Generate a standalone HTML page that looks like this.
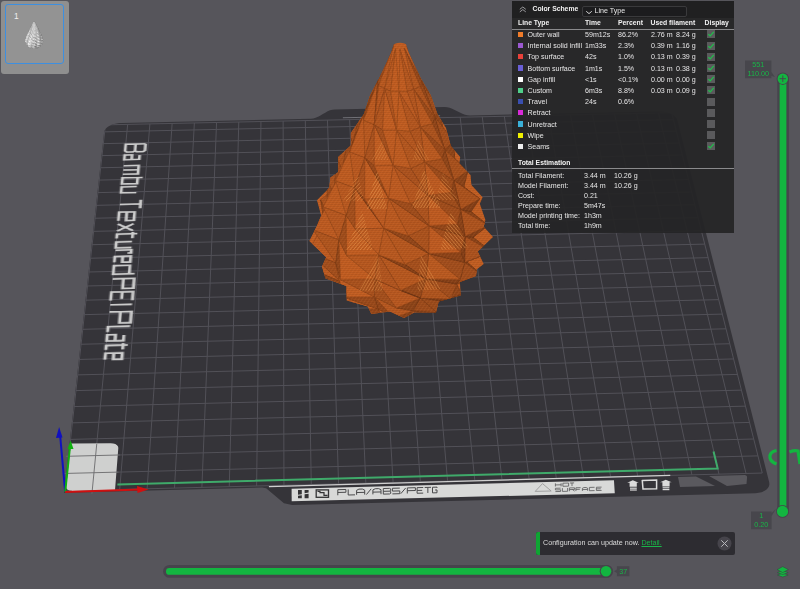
<!DOCTYPE html>
<html><head><meta charset="utf-8">
<style>
*{margin:0;padding:0;box-sizing:border-box}
html,body{width:800px;height:589px;overflow:hidden;background:#56555b;font-family:"Liberation Sans",sans-serif}
#scene{position:absolute;left:0;top:0}
.abs{position:absolute}
#thumb{left:1px;top:1px;width:68px;height:73px;background:#8f8f8f;border-radius:3px}
#thumbin{left:5px;top:4px;width:59px;height:60px;border:1.4px solid #3d8fe0;border-radius:3px;background:#939393}
#thumbin span{position:absolute;left:8px;top:6.5px;color:#f0f0f0;font-size:8.4px;line-height:9px}
#ptext{left:0;top:0;width:256px;height:256px;transform-origin:0 0;transform:matrix3d(2.228789565174428,-0.04478521966795166,0,2.4782137766714392e-05,-0.20630338006798807,1.0676674045005554,0,-0.0007375917103212529,0,0,1,0,105.40088093560712,124.86503627807188,0,1.0)}
#ptext div{position:absolute;left:0;top:0;transform-origin:0 0;white-space:nowrap;color:#c8c8c8;font-size:13.6px;line-height:16px;font-weight:bold;letter-spacing:0px}
#legend{left:512px;top:1px;width:222px;height:232px;background:rgba(37,37,38,0.93);color:#e6e6e6;font-size:7.4px}
#legend .t{position:absolute;height:13px;line-height:13px;white-space:nowrap;font-size:7.1px}
#legend .t.b{font-size:6.8px;font-weight:bold;color:#f2f2f2}
#legend .sw{position:absolute;width:5.2px;height:5.2px}
#legend .cb{position:absolute;width:8px;height:8px;background:#5a5a5c}
#legend .cb svg{display:block}
#legend .sep{position:absolute;left:0;width:222px;height:1.2px;background:#8a8a8c}
#legend .chev{position:absolute;left:6.5px;top:5px}
#legend .combo{position:absolute;left:69.6px;top:4.6px;width:105px;height:11px;background:#1c1c1e;border:1px solid #3a3a3c;border-radius:2px}
#legend .combo span{position:absolute;left:12px;top:-1.5px;line-height:13px;font-size:7.1px;color:#e6e6e6}
.b{font-weight:bold}
.glab{color:#19b548;font-size:7.2px;line-height:8.6px;text-align:center}
#notif{left:535.5px;top:531.8px;width:199.3px;height:23px;background:#2d2c31;border-radius:2px}
#nbar{position:absolute;left:0;top:0;width:4.5px;height:23px;background:#0fa533;border-radius:2px 0 0 2px}
#notif span{position:absolute;left:7.5px;top:5px;line-height:13px;font-size:7.15px;color:#dcdcdc;white-space:nowrap}
#notif u{color:#19b548}
</style></head><body>
<svg id="scene" width="800" height="589" viewBox="0 0 800 589">
  <path d="M64.08,492.66 L262.06,487.59 L266.16,488.36 L283.98,503.14 L292.27,505.08 L755.48,493.13 L758.63,492.84 L761.55,492.16 L764.14,491.11 L766.29,489.73 L767.92,488.07 L768.97,486.21 L769.39,484.21 L769.19,482.15 L677.37,120.19 L676.79,118.75 L675.78,117.36 L674.39,116.05 L672.63,114.85 L670.57,113.79 L668.23,112.91 L665.69,112.21 L663.01,111.71 L660.25,111.44 L657.47,111.38 L469.92,115.41 L467.47,115.25 L464.97,114.66 L462.43,113.73 L459.86,112.54 L457.28,111.21 L454.71,109.89 L452.15,108.71 L449.63,107.78 L447.15,107.2 L444.71,107.03 L334.85,109.38 L332.43,109.65 L330.03,110.34 L327.64,111.37 L325.26,112.66 L322.87,114.09 L320.48,115.53 L318.08,116.83 L315.67,117.87 L313.25,118.56 L310.82,118.83 L121.81,122.89 L119.19,123.06 L116.62,123.43 L114.14,124.0 L111.83,124.76 L109.75,125.69 L107.93,126.77 L106.43,127.97 L105.29,129.26 L104.52,130.6 L104.17,131.98 Z" fill="#353439"/>
  <clipPath id="pc"><path d="M64.08,492.66 L262.06,487.59 L266.16,488.36 L283.98,503.14 L292.27,505.08 L755.48,493.13 L758.63,492.84 L761.55,492.16 L764.14,491.11 L766.29,489.73 L767.92,488.07 L768.97,486.21 L769.39,484.21 L769.19,482.15 L677.37,120.19 L676.79,118.75 L675.78,117.36 L674.39,116.05 L672.63,114.85 L670.57,113.79 L668.23,112.91 L665.69,112.21 L663.01,111.71 L660.25,111.44 L657.47,111.38 L469.92,115.41 L467.47,115.25 L464.97,114.66 L462.43,113.73 L459.86,112.54 L457.28,111.21 L454.71,109.89 L452.15,108.71 L449.63,107.78 L447.15,107.2 L444.71,107.03 L334.85,109.38 L332.43,109.65 L330.03,110.34 L327.64,111.37 L325.26,112.66 L322.87,114.09 L320.48,115.53 L318.08,116.83 L315.67,117.87 L313.25,118.56 L310.82,118.83 L121.81,122.89 L119.19,123.06 L116.62,123.43 L114.14,124.0 L111.83,124.76 L109.75,125.69 L107.93,126.77 L106.43,127.97 L105.29,129.26 L104.52,130.6 L104.17,131.98 Z"/></clipPath>
  <path d="M64.83,490.88 L105.4,124.87 M92.28,490.18 L127.66,124.39 M119.71,489.47 L149.9,123.91 M147.12,488.77 L172.14,123.43 M174.52,488.07 L194.36,122.95 M201.9,487.37 L216.57,122.47 M229.26,486.67 L238.77,122.0 M256.61,485.97 L260.96,121.52 M283.94,485.27 L283.14,121.04 M311.26,484.58 L305.31,120.57 M338.55,483.88 L327.47,120.09 M365.84,483.18 L349.61,119.61 M393.1,482.48 L371.75,119.14 M420.35,481.79 L393.87,118.66 M447.58,481.09 L415.99,118.19 M474.79,480.39 L438.09,117.71 M501.99,479.7 L460.18,117.23 M529.17,479.0 L482.26,116.76 M556.34,478.31 L504.33,116.28 M583.49,477.61 L526.39,115.81 M610.62,476.92 L548.44,115.34 M637.73,476.23 L570.48,114.86 M664.83,475.53 L592.5,114.39 M691.91,474.84 L614.52,113.92 M718.98,474.15 L636.52,113.44 M746.03,473.46 L658.52,112.97 M762.25,473.04 L671.71,112.69 M64.83,490.88 L762.25,473.04 M66.76,473.41 L757.94,455.87 M68.67,456.26 L753.7,439.0 M70.53,439.4 L749.54,422.43 M72.37,422.85 L745.44,406.15 M74.17,406.58 L741.42,390.14 M75.94,390.6 L737.47,374.42 M77.69,374.88 L733.59,358.95 M79.4,359.43 L729.77,343.75 M81.08,344.25 L726.01,328.81 M82.74,329.31 L722.32,314.11 M84.37,314.63 L718.69,299.65 M85.97,300.18 L715.11,285.42 M87.54,285.97 L711.6,271.43 M89.09,271.99 L708.14,257.66 M90.62,258.23 L704.73,244.11 M92.12,244.69 L701.38,230.77 M93.6,231.36 L698.08,217.64 M95.05,218.24 L694.83,204.72 M96.48,205.33 L691.64,191.99 M97.89,192.61 L688.49,179.46 M99.28,180.09 L685.39,167.12 M100.65,167.76 L682.33,154.97 M101.99,155.61 L679.33,142.99 M103.32,143.64 L676.36,131.2 M104.63,131.85 L673.44,119.58 M105.4,124.87 L671.71,112.69" stroke="#525158" stroke-width="1" fill="none" clip-path="url(#pc)"/>
  <path d="M268.91,486.54 L670.25,475.4" stroke="#cfcfcf" stroke-width="1.2" fill="none"/>
  <path d="M342.89,117.8 L440.1,115.71" stroke="#707076" stroke-width="1.1" fill="none"/>
  <path d="M291.61,488.77 L613.93,480.34 L614.79,493.2 L291.69,501.34 Z" fill="#d8d9d8"/>
  <path d="M678,477 L696,476.6 L715,486 L680,487 Z" fill="#5a595e"/>
  <path d="M709,476 L745,475 Q747.5,475.5 747,478 L746.5,484 L727,486 Z" fill="#5a595e"/>
  <g fill="#dcdcdc">
   <path d="M632.8,480.2 L638.8,482.8 L636.8,482.8 L636.8,486.8 L629.6,486.8 L629.6,482.8 L627.2,482.8 Z"/>
   <rect x="630" y="487.6" width="6.8" height="1.2"/><rect x="630" y="489.4" width="6.8" height="1.2"/>
   <path d="M665.8,479.7 L671.6,482.3 L669.6,482.3 L669.6,486.4 L662.4,486.4 L662.4,482.3 L660.1,482.3 Z"/>
   <rect x="662.6" y="487.2" width="6.8" height="1.2"/><rect x="662.6" y="489" width="6.8" height="1.2"/>
  </g>
  <path d="M642.3,480.6 L656.6,480 L656.6,488.8 L643,489.1 Z" fill="none" stroke="#dcdcdc" stroke-width="1.5"/>
  <g fill="#333335">
   <path d="M298,490 H301.8 V494.3 L298,494.8 Z"/><path d="M298,495.8 L301.8,495.3 V498.3 H298 Z"/>
   <path d="M304.6,490 H308.6 V492.6 L304.6,493.2 Z"/><path d="M304.6,494.2 L308.6,493.7 V498.2 H304.6 Z"/>
  </g>
  <rect x="316.2" y="489.9" width="12.3" height="7.4" fill="none" stroke="#333335" stroke-width="1.3"/>
  <path d="M317.5,491.4 H320 V492.6 H324 V495.3 H327.6" fill="none" stroke="#333335" stroke-width="1.2"/>
  <path d="M542.5,483.6 L551.2,491 L535.2,491.4 Z" fill="none" stroke="#8a8a8a" stroke-width="0.7"/>
  <path d="M337.80,495.28 L337.80,489.68 L345.90,489.47 L345.90,492.27 L337.80,492.48 M348.20,489.41 L348.20,495.01 L355.00,494.84 M356.60,494.80 L356.60,490.32 L358.91,489.14 L362.39,489.05 L364.70,490.11 L364.70,494.59 M356.60,492.56 L364.70,492.35 M366.40,494.55 L371.20,488.83 M372.90,494.38 L372.90,489.90 L375.21,488.73 L378.69,488.64 L381.00,489.70 L381.00,494.18 M372.90,492.14 L381.00,491.94 M383.30,488.52 L389.64,488.36 L390.70,488.89 L390.70,490.57 L389.64,491.16 L390.70,491.69 L390.70,493.37 L389.64,493.96 L383.30,494.12 L383.30,488.52 M383.30,491.32 L389.64,491.16 M399.80,488.10 L392.40,488.29 L392.40,491.09 L399.80,490.90 L399.80,493.70 L392.40,493.89 M400.80,493.67 L405.70,487.95 M407.30,493.51 L407.30,487.91 L415.40,487.70 L415.40,490.50 L407.30,490.71 M423.20,487.50 L417.10,487.66 L417.10,493.26 L423.20,493.10 M417.10,490.46 L422.18,490.33 M424.70,487.46 L431.00,487.30 M427.85,487.38 L427.85,492.98 M437.00,487.99 L437.00,487.15 L432.50,487.26 L432.50,492.86 L437.00,492.75 L437.00,489.95 L435.07,490.00" fill="none" stroke="#4a4a4c" stroke-width="1.0"/>
  <path d="M555.40,483.39 L555.40,486.49 M561.10,483.24 L561.10,486.34 M555.40,484.94 L561.10,484.79 M562.90,483.20 L568.60,483.05 L568.60,486.15 L562.90,486.30 L562.90,483.20 M569.90,483.02 L574.10,482.91 M572.00,482.97 L572.00,486.07 M560.60,488.16 L555.40,488.29 L555.40,489.94 L560.60,489.81 L560.60,491.46 L555.40,491.59 M562.40,488.11 L562.40,491.41 L567.60,491.28 L567.60,487.98 M569.40,491.23 L569.40,487.93 L574.60,487.80 L574.60,489.45 L569.40,489.58 M572.37,489.51 L574.60,491.10 M580.60,487.65 L575.90,487.77 L575.90,491.07 M575.90,489.42 L579.82,489.32 M582.40,490.90 L582.40,488.26 L583.89,487.56 L586.11,487.51 L587.60,488.13 L587.60,490.77 M582.40,489.58 L587.60,489.45 M594.60,487.29 L589.40,487.42 L589.40,490.72 L594.60,490.59 M601.60,487.11 L596.40,487.24 L596.40,490.54 L601.60,490.41 M596.40,488.89 L600.73,488.78" fill="none" stroke="#5e5e60" stroke-width="0.85"/>
  <path d="M117.39,484.45 L717.68,468.44 L713.54,451.53" stroke="#3faa6a" stroke-width="2" fill="none"/>
  <clipPath id="cc"><path d="M394,44.3 L406,44.3 L408.5,52 L414,64 L421,78.8 L430.7,95 L437.4,114 L446,128 L450.8,145.9 L460.2,157.1 L459.3,163.6 L470.5,174.9 L471.4,185.1 L482.6,197.3 L479.8,203.8 L485.4,220 L483.7,226.8 L493,237 L477.7,251.4 L483.7,264.1 L476.9,269.2 L476,276 L459.9,282 L460.7,295.6 L438.7,301.5 L436,312.5 L414.3,312.5 L404,318.1 L390,311.5 L371.3,314 L367.9,306.4 L346.7,300.5 L346.7,286 L325.5,278.4 L322,266.5 L326.3,257.2 L309.3,240.9 L317,225.7 L321.2,215.5 L317,200.2 L327.2,190 L329.3,187.6 L330.5,177.4 L338.2,172.3 L338.2,157.1 L350.9,145.6 L350.9,132.9 L364,114 L370.2,95 L379,78.8 L386,64 L391.5,52 Z"/></clipPath>
  <path d="M394,44.3 L406,44.3 L408.5,52 L414,64 L421,78.8 L430.7,95 L437.4,114 L446,128 L450.8,145.9 L460.2,157.1 L459.3,163.6 L470.5,174.9 L471.4,185.1 L482.6,197.3 L479.8,203.8 L485.4,220 L483.7,226.8 L493,237 L477.7,251.4 L483.7,264.1 L476.9,269.2 L476,276 L459.9,282 L460.7,295.6 L438.7,301.5 L436,312.5 L414.3,312.5 L404,318.1 L390,311.5 L371.3,314 L367.9,306.4 L346.7,300.5 L346.7,286 L325.5,278.4 L322,266.5 L326.3,257.2 L309.3,240.9 L317,225.7 L321.2,215.5 L317,200.2 L327.2,190 L329.3,187.6 L330.5,177.4 L338.2,172.3 L338.2,157.1 L350.9,145.6 L350.9,132.9 L364,114 L370.2,95 L379,78.8 L386,64 L391.5,52 Z" fill="#c25e22"/>
  <ellipse cx="400" cy="45" rx="6.2" ry="2.2" fill="#c25e22"/>
  <g clip-path="url(#cc)"><defs><pattern id="ll" width="4" height="2" patternUnits="userSpaceOnUse"><rect width="4" height="1" fill="#5a2508" opacity="0.12"/></pattern><pattern id="dg" width="3" height="3" patternUnits="userSpaceOnUse" patternTransform="rotate(35)"><rect width="1" height="3" fill="#e89050" opacity="0.12"/></pattern></defs>
<path d="M399.6,206.8 L374.7,225.9 L359.1,239.3Z" fill="rgb(143, 69, 25)" stroke="rgb(114, 55, 20)" stroke-width="0.7"/>
<path d="M396.0,183.6 L367.7,200.4 L351.9,215.6Z" fill="rgb(148, 71, 26)" stroke="rgb(118, 56, 20)" stroke-width="0.7"/>
<path d="M359.1,239.3 L347.8,267.5 L350.6,279.2Z" fill="rgb(161, 78, 28)" stroke="rgb(128, 62, 22)" stroke-width="0.7"/>
<path d="M351.9,215.6 L329.1,243.4 L334.4,258.7Z" fill="rgb(168, 81, 29)" stroke="rgb(134, 64, 23)" stroke-width="0.7"/>
<path d="M393.1,163.0 L365.0,179.1 L350.1,193.4Z" fill="rgb(148, 72, 26)" stroke="rgb(118, 57, 20)" stroke-width="0.7"/>
<path d="M466.6,261.6 L451.0,283.9 L458.1,272.6Z" fill="rgb(131, 63, 23)" stroke="rgb(104, 50, 18)" stroke-width="0.7"/>
<path d="M350.1,193.4 L319.2,221.0 L326.7,237.7Z" fill="rgb(171, 83, 30)" stroke="rgb(136, 66, 24)" stroke-width="0.7"/>
<path d="M473.2,237.3 L466.6,261.6 L474.5,246.6Z" fill="rgb(131, 63, 23)" stroke="rgb(104, 50, 18)" stroke-width="0.7"/>
<path d="M319.2,221.0 L334.4,258.7 L326.7,237.7Z" fill="rgb(136, 66, 23)" stroke="rgb(108, 52, 18)" stroke-width="0.7"/>
<path d="M391.2,141.4 L365.0,160.0 L352.3,172.9Z" fill="rgb(146, 71, 25)" stroke="rgb(116, 56, 20)" stroke-width="0.7"/>
<path d="M471.1,211.7 L473.2,237.3 L480.3,220.5Z" fill="rgb(139, 67, 24)" stroke="rgb(111, 53, 19)" stroke-width="0.7"/>
<path d="M334.4,258.7 L336.2,288.6 L353.5,296.7Z" fill="rgb(186, 90, 32)" stroke="rgb(148, 72, 25)" stroke-width="0.7"/>
<path d="M336.2,288.6 L368.3,310.4 L353.5,296.7Z" fill="rgb(140, 68, 24)" stroke="rgb(112, 54, 19)" stroke-width="0.7"/>
<path d="M441.8,300.8 L434.2,303.4 L461.7,294.4Z" fill="rgb(131, 63, 23)" stroke="rgb(104, 50, 18)" stroke-width="0.7"/>
<path d="M352.3,172.9 L320.6,199.9 L327.5,215.6Z" fill="rgb(171, 83, 30)" stroke="rgb(136, 66, 24)" stroke-width="0.7"/>
<path d="M320.6,199.9 L326.7,237.7 L327.5,215.6Z" fill="rgb(148, 72, 26)" stroke="rgb(118, 57, 20)" stroke-width="0.7"/>
<path d="M463.8,186.9 L471.1,211.7 L474.5,195.7Z" fill="rgb(140, 68, 24)" stroke="rgb(112, 54, 19)" stroke-width="0.7"/>
<path d="M456.7,284.0 L451.0,283.9 L482.0,275.1Z" fill="rgb(131, 63, 23)" stroke="rgb(104, 50, 18)" stroke-width="0.7"/>
<path d="M326.7,237.7 L316.7,271.5 L340.4,281.5Z" fill="rgb(189, 91, 33)" stroke="rgb(151, 72, 26)" stroke-width="0.7"/>
<path d="M316.7,271.5 L353.5,296.7 L340.4,281.5Z" fill="rgb(145, 70, 25)" stroke="rgb(116, 56, 20)" stroke-width="0.7"/>
<path d="M456.7,284.0 L441.8,300.8 L461.7,294.4Z" fill="rgb(146, 70, 25)" stroke="rgb(116, 56, 20)" stroke-width="0.7"/>
<path d="M464.6,262.4 L482.0,275.1 L466.6,261.6Z" fill="rgb(135, 65, 23)" stroke="rgb(108, 52, 18)" stroke-width="0.7"/>
<path d="M390.6,119.0 L367.3,140.2 L356.5,150.9Z" fill="rgb(142, 69, 25)" stroke="rgb(113, 55, 20)" stroke-width="0.7"/>
<path d="M354.5,308.5 L383.9,319.1 L378.1,309.1Z" fill="rgb(148, 71, 25)" stroke="rgb(118, 56, 20)" stroke-width="0.7"/>
<path d="M413.0,310.8 L426.9,314.6 L436.4,312.3Z" fill="rgb(131, 63, 23)" stroke="rgb(104, 50, 18)" stroke-width="0.7"/>
<path d="M464.6,262.4 L466.6,261.6 L491.7,251.8Z" fill="rgb(131, 63, 23)" stroke="rgb(104, 50, 18)" stroke-width="0.7"/>
<path d="M454.7,160.7 L463.8,186.9 L464.8,172.5Z" fill="rgb(138, 66, 24)" stroke="rgb(110, 52, 19)" stroke-width="0.7"/>
<path d="M326.9,179.7 L327.5,215.6 L333.8,193.7Z" fill="rgb(156, 75, 27)" stroke="rgb(124, 60, 21)" stroke-width="0.7"/>
<path d="M356.5,150.9 L326.9,179.7 L333.8,193.7Z" fill="rgb(171, 83, 30)" stroke="rgb(136, 66, 24)" stroke-width="0.7"/>
<path d="M394.1,317.9 L407.0,320.7 L413.0,310.8Z" fill="rgb(136, 66, 24)" stroke="rgb(108, 52, 19)" stroke-width="0.7"/>
<path d="M465.1,236.5 L491.7,251.8 L473.2,237.3Z" fill="rgb(138, 67, 24)" stroke="rgb(110, 53, 19)" stroke-width="0.7"/>
<path d="M340.4,281.5 L354.5,308.5 L378.1,309.1Z" fill="rgb(194, 94, 34)" stroke="rgb(155, 75, 27)" stroke-width="0.7"/>
<path d="M327.5,215.6 L308.5,252.3 L335.8,262.8Z" fill="rgb(189, 91, 33)" stroke="rgb(151, 72, 26)" stroke-width="0.7"/>
<path d="M464.6,262.4 L456.7,284.0 L482.0,275.1Z" fill="rgb(161, 77, 28)" stroke="rgb(128, 61, 22)" stroke-width="0.7"/>
<path d="M465.1,236.5 L473.2,237.3 L488.4,225.3Z" fill="rgb(131, 63, 23)" stroke="rgb(104, 50, 18)" stroke-width="0.7"/>
<path d="M308.5,252.3 L340.4,281.5 L335.8,262.8Z" fill="rgb(162, 78, 28)" stroke="rgb(129, 62, 22)" stroke-width="0.7"/>
<path d="M420.2,298.0 L436.4,312.3 L441.8,300.8Z" fill="rgb(155, 75, 27)" stroke="rgb(124, 60, 21)" stroke-width="0.7"/>
<path d="M460.6,209.5 L488.4,225.3 L471.1,211.7Z" fill="rgb(139, 67, 24)" stroke="rgb(111, 53, 19)" stroke-width="0.7"/>
<path d="M443.7,133.4 L454.7,160.7 L453.0,148.7Z" fill="rgb(134, 65, 23)" stroke="rgb(107, 52, 18)" stroke-width="0.7"/>
<path d="M420.2,298.0 L413.0,310.8 L436.4,312.3Z" fill="rgb(156, 75, 27)" stroke="rgb(124, 60, 21)" stroke-width="0.7"/>
<path d="M460.6,209.5 L471.1,211.7 L479.8,198.8Z" fill="rgb(131, 63, 23)" stroke="rgb(104, 50, 18)" stroke-width="0.7"/>
<path d="M336.6,157.7 L333.8,193.7 L342.2,169.4Z" fill="rgb(158, 76, 27)" stroke="rgb(126, 60, 21)" stroke-width="0.7"/>
<path d="M335.8,262.8 L340.4,281.5 L343.3,297.0Z" fill="rgb(134, 65, 23)" stroke="rgb(107, 52, 18)" stroke-width="0.7"/>
<path d="M374.3,297.0 L378.1,309.1 L394.1,317.9Z" fill="rgb(146, 70, 25)" stroke="rgb(116, 56, 20)" stroke-width="0.7"/>
<path d="M465.1,236.5 L464.6,262.4 L491.7,251.8Z" fill="rgb(171, 82, 30)" stroke="rgb(136, 65, 24)" stroke-width="0.7"/>
<path d="M420.2,298.0 L441.8,300.8 L451.1,299.3Z" fill="rgb(131, 63, 23)" stroke="rgb(104, 50, 18)" stroke-width="0.7"/>
<path d="M374.3,297.0 L394.1,317.9 L413.0,310.8Z" fill="rgb(182, 88, 32)" stroke="rgb(145, 70, 25)" stroke-width="0.7"/>
<path d="M363.2,127.4 L336.6,157.7 L342.2,169.4Z" fill="rgb(169, 82, 29)" stroke="rgb(135, 65, 23)" stroke-width="0.7"/>
<path d="M343.3,297.0 L378.1,309.1 L374.3,297.0Z" fill="rgb(152, 73, 26)" stroke="rgb(121, 58, 20)" stroke-width="0.7"/>
<path d="M333.8,193.7 L313.3,230.1 L338.9,239.9Z" fill="rgb(189, 91, 33)" stroke="rgb(151, 72, 26)" stroke-width="0.7"/>
<path d="M453.9,180.5 L479.8,198.8 L463.8,186.9Z" fill="rgb(134, 65, 23)" stroke="rgb(107, 52, 18)" stroke-width="0.7"/>
<path d="M460.2,279.5 L456.7,284.0 L464.6,262.4Z" fill="rgb(131, 63, 23)" stroke="rgb(104, 50, 18)" stroke-width="0.7"/>
<path d="M313.3,230.1 L335.8,262.8 L338.9,239.9Z" fill="rgb(175, 85, 30)" stroke="rgb(140, 68, 24)" stroke-width="0.7"/>
<path d="M335.8,262.8 L343.3,297.0 L374.3,297.0Z" fill="rgb(194, 94, 34)" stroke="rgb(155, 75, 27)" stroke-width="0.7"/>
<path d="M460.6,209.5 L465.1,236.5 L488.4,225.3Z" fill="rgb(172, 83, 30)" stroke="rgb(137, 66, 24)" stroke-width="0.7"/>
<path d="M453.9,180.5 L463.8,186.9 L468.0,170.7Z" fill="rgb(136, 66, 24)" stroke="rgb(108, 52, 19)" stroke-width="0.7"/>
<path d="M396.4,308.0 L413.0,310.8 L420.2,298.0Z" fill="rgb(138, 67, 24)" stroke="rgb(110, 53, 19)" stroke-width="0.7"/>
<path d="M425.8,278.9 L451.1,299.3 L456.7,284.0Z" fill="rgb(160, 77, 28)" stroke="rgb(128, 61, 22)" stroke-width="0.7"/>
<path d="M432.8,104.6 L443.7,133.4 L440.4,124.1Z" fill="rgb(131, 63, 23)" stroke="rgb(104, 50, 18)" stroke-width="0.7"/>
<path d="M425.8,278.9 L456.7,284.0 L460.2,279.5Z" fill="rgb(131, 63, 23)" stroke="rgb(104, 50, 18)" stroke-width="0.7"/>
<path d="M444.6,149.4 L468.0,170.7 L454.7,160.7Z" fill="rgb(131, 63, 23)" stroke="rgb(104, 50, 18)" stroke-width="0.7"/>
<path d="M338.9,239.9 L335.8,262.8 L340.6,279.8Z" fill="rgb(148, 72, 26)" stroke="rgb(118, 57, 20)" stroke-width="0.7"/>
<path d="M460.8,252.5 L464.6,262.4 L465.1,236.5Z" fill="rgb(132, 63, 23)" stroke="rgb(105, 50, 18)" stroke-width="0.7"/>
<path d="M453.9,180.5 L460.6,209.5 L479.8,198.8Z" fill="rgb(170, 82, 29)" stroke="rgb(136, 65, 23)" stroke-width="0.7"/>
<path d="M348.8,133.5 L342.2,169.4 L353.0,142.6Z" fill="rgb(159, 77, 28)" stroke="rgb(127, 61, 22)" stroke-width="0.7"/>
<path d="M425.8,278.9 L420.2,298.0 L451.1,299.3Z" fill="rgb(174, 84, 30)" stroke="rgb(139, 67, 24)" stroke-width="0.7"/>
<path d="M342.2,169.4 L323.1,207.0 L346.2,215.5Z" fill="rgb(190, 92, 33)" stroke="rgb(152, 73, 26)" stroke-width="0.7"/>
<path d="M444.6,149.4 L454.7,160.7 L454.0,141.3Z" fill="rgb(141, 68, 24)" stroke="rgb(112, 54, 19)" stroke-width="0.7"/>
<path d="M323.1,207.0 L338.9,239.9 L346.2,215.5Z" fill="rgb(182, 88, 32)" stroke="rgb(145, 70, 25)" stroke-width="0.7"/>
<path d="M374.9,279.0 L374.3,297.0 L396.4,308.0Z" fill="rgb(163, 79, 28)" stroke="rgb(130, 63, 22)" stroke-width="0.7"/>
<path d="M370.7,101.5 L348.8,133.5 L353.0,142.6Z" fill="rgb(167, 80, 29)" stroke="rgb(133, 64, 23)" stroke-width="0.7"/>
<path d="M374.9,279.0 L396.4,308.0 L420.2,298.0Z" fill="rgb(183, 88, 32)" stroke="rgb(146, 70, 25)" stroke-width="0.7"/>
<path d="M340.6,279.8 L374.3,297.0 L374.9,279.0Z" fill="rgb(168, 81, 29)" stroke="rgb(134, 64, 23)" stroke-width="0.7"/>
<path d="M428.7,253.6 L460.2,279.5 L464.6,262.4Z" fill="rgb(160, 77, 28)" stroke="rgb(128, 61, 22)" stroke-width="0.7"/>
<path d="M457.5,223.8 L465.1,236.5 L460.6,209.5Z" fill="rgb(137, 66, 24)" stroke="rgb(109, 52, 19)" stroke-width="0.7"/>
<path d="M338.9,239.9 L340.6,279.8 L374.9,279.0Z" fill="rgb(193, 93, 33)" stroke="rgb(154, 74, 26)" stroke-width="0.7"/>
<path d="M428.7,253.6 L464.6,262.4 L460.8,252.5Z" fill="rgb(140, 67, 24)" stroke="rgb(112, 53, 19)" stroke-width="0.7"/>
<path d="M444.6,149.4 L453.9,180.5 L468.0,170.7Z" fill="rgb(167, 81, 29)" stroke="rgb(133, 64, 23)" stroke-width="0.7"/>
<path d="M400.5,290.5 L420.2,298.0 L425.8,278.9Z" fill="rgb(151, 73, 26)" stroke="rgb(120, 58, 20)" stroke-width="0.7"/>
<path d="M374.9,279.0 L420.2,298.0 L400.5,290.5Z" fill="rgb(131, 63, 23)" stroke="rgb(104, 50, 18)" stroke-width="0.7"/>
<path d="M346.2,215.5 L338.9,239.9 L346.6,255.6Z" fill="rgb(159, 77, 27)" stroke="rgb(127, 61, 21)" stroke-width="0.7"/>
<path d="M429.0,225.9 L460.8,252.5 L465.1,236.5Z" fill="rgb(160, 77, 28)" stroke="rgb(128, 61, 22)" stroke-width="0.7"/>
<path d="M451.1,192.4 L460.6,209.5 L453.9,180.5Z" fill="rgb(140, 67, 24)" stroke="rgb(112, 53, 19)" stroke-width="0.7"/>
<path d="M428.7,253.6 L425.8,278.9 L460.2,279.5Z" fill="rgb(186, 90, 32)" stroke="rgb(148, 72, 25)" stroke-width="0.7"/>
<path d="M353.0,142.6 L335.6,180.9 L354.9,188.1Z" fill="rgb(190, 92, 33)" stroke="rgb(152, 73, 26)" stroke-width="0.7"/>
<path d="M335.6,180.9 L346.2,215.5 L354.9,188.1Z" fill="rgb(184, 89, 32)" stroke="rgb(147, 71, 25)" stroke-width="0.7"/>
<path d="M429.0,225.9 L465.1,236.5 L457.5,223.8Z" fill="rgb(147, 71, 25)" stroke="rgb(117, 56, 20)" stroke-width="0.7"/>
<path d="M434.7,116.8 L443.7,133.4 L439.9,110.5Z" fill="rgb(142, 69, 25)" stroke="rgb(113, 55, 20)" stroke-width="0.7"/>
<path d="M361.5,106.6 L353.0,142.6 L364.1,113.4Z" fill="rgb(158, 76, 27)" stroke="rgb(126, 60, 21)" stroke-width="0.7"/>
<path d="M346.6,255.6 L374.9,279.0 L378.8,254.9Z" fill="rgb(182, 88, 31)" stroke="rgb(145, 70, 24)" stroke-width="0.7"/>
<path d="M346.2,215.5 L346.6,255.6 L378.8,254.9Z" fill="rgb(193, 93, 33)" stroke="rgb(154, 74, 26)" stroke-width="0.7"/>
<path d="M427.8,195.3 L457.5,223.8 L460.6,209.5Z" fill="rgb(158, 76, 27)" stroke="rgb(126, 60, 21)" stroke-width="0.7"/>
<path d="M434.7,116.8 L444.6,149.4 L454.0,141.3Z" fill="rgb(162, 78, 28)" stroke="rgb(129, 62, 22)" stroke-width="0.7"/>
<path d="M364.1,113.4 L353.0,142.6 L349.8,151.9Z" fill="rgb(140, 68, 24)" stroke="rgb(112, 54, 19)" stroke-width="0.7"/>
<path d="M378.8,254.9 L400.5,290.5 L425.8,278.9Z" fill="rgb(182, 88, 31)" stroke="rgb(145, 70, 24)" stroke-width="0.7"/>
<path d="M378.8,254.9 L374.9,279.0 L400.5,290.5Z" fill="rgb(177, 85, 31)" stroke="rgb(141, 68, 24)" stroke-width="0.7"/>
<path d="M427.8,195.3 L460.6,209.5 L451.1,192.4Z" fill="rgb(157, 76, 27)" stroke="rgb(125, 60, 21)" stroke-width="0.7"/>
<path d="M442.3,158.8 L453.9,180.5 L444.6,149.4Z" fill="rgb(142, 69, 25)" stroke="rgb(113, 55, 20)" stroke-width="0.7"/>
<path d="M354.9,188.1 L346.2,215.5 L355.2,229.1Z" fill="rgb(163, 79, 28)" stroke="rgb(130, 63, 22)" stroke-width="0.7"/>
<path d="M429.0,225.9 L428.7,253.6 L460.8,252.5Z" fill="rgb(190, 91, 33)" stroke="rgb(152, 72, 26)" stroke-width="0.7"/>
<path d="M404.9,264.4 L425.8,278.9 L428.7,253.6Z" fill="rgb(164, 79, 28)" stroke="rgb(131, 63, 22)" stroke-width="0.7"/>
<path d="M378.8,254.9 L425.8,278.9 L404.9,264.4Z" fill="rgb(136, 65, 23)" stroke="rgb(108, 52, 18)" stroke-width="0.7"/>
<path d="M381.0,73.9 L361.5,106.6 L364.1,113.4Z" fill="rgb(163, 79, 28)" stroke="rgb(130, 63, 22)" stroke-width="0.7"/>
<path d="M424.6,162.0 L451.1,192.4 L453.9,180.5Z" fill="rgb(155, 75, 27)" stroke="rgb(124, 60, 21)" stroke-width="0.7"/>
<path d="M349.8,151.9 L354.9,188.1 L364.9,157.6Z" fill="rgb(185, 89, 32)" stroke="rgb(148, 71, 25)" stroke-width="0.7"/>
<path d="M364.1,113.4 L349.8,151.9 L364.9,157.6Z" fill="rgb(189, 91, 33)" stroke="rgb(151, 72, 26)" stroke-width="0.7"/>
<path d="M427.8,195.3 L429.0,225.9 L457.5,223.8Z" fill="rgb(190, 91, 33)" stroke="rgb(152, 72, 26)" stroke-width="0.7"/>
<path d="M424.6,162.0 L453.9,180.5 L442.3,158.8Z" fill="rgb(166, 80, 29)" stroke="rgb(132, 64, 23)" stroke-width="0.7"/>
<path d="M354.9,188.1 L355.2,229.1 L383.9,228.2Z" fill="rgb(194, 93, 34)" stroke="rgb(155, 74, 27)" stroke-width="0.7"/>
<path d="M355.2,229.1 L378.8,254.9 L383.9,228.2Z" fill="rgb(188, 91, 33)" stroke="rgb(150, 72, 26)" stroke-width="0.7"/>
<path d="M383.9,228.2 L404.9,264.4 L428.7,253.6Z" fill="rgb(182, 88, 31)" stroke="rgb(145, 70, 24)" stroke-width="0.7"/>
<path d="M408.3,235.8 L428.7,253.6 L429.0,225.9Z" fill="rgb(170, 82, 29)" stroke="rgb(136, 65, 23)" stroke-width="0.7"/>
<path d="M383.9,228.2 L378.8,254.9 L404.9,264.4Z" fill="rgb(184, 89, 32)" stroke="rgb(147, 71, 25)" stroke-width="0.7"/>
<path d="M354.9,188.1 L383.9,228.2 L364.7,199.1Z" fill="rgb(138, 66, 24)" stroke="rgb(110, 52, 19)" stroke-width="0.7"/>
<path d="M383.9,228.2 L428.7,253.6 L408.3,235.8Z" fill="rgb(145, 70, 25)" stroke="rgb(116, 56, 20)" stroke-width="0.7"/>
<path d="M432.5,123.6 L444.6,149.4 L434.7,116.8Z" fill="rgb(144, 69, 25)" stroke="rgb(115, 55, 20)" stroke-width="0.7"/>
<path d="M364.9,157.6 L354.9,188.1 L364.7,199.1Z" fill="rgb(169, 81, 29)" stroke="rgb(135, 64, 23)" stroke-width="0.7"/>
<path d="M422.0,82.5 L432.8,104.6 L423.8,78.5Z" fill="rgb(142, 69, 25)" stroke="rgb(113, 55, 20)" stroke-width="0.7"/>
<path d="M422.0,82.5 L434.7,116.8 L439.9,110.5Z" fill="rgb(157, 76, 27)" stroke="rgb(125, 60, 21)" stroke-width="0.7"/>
<path d="M420.3,126.9 L442.3,158.8 L444.6,149.4Z" fill="rgb(152, 73, 26)" stroke="rgb(121, 58, 20)" stroke-width="0.7"/>
<path d="M424.6,162.0 L427.8,195.3 L451.1,192.4Z" fill="rgb(189, 91, 33)" stroke="rgb(151, 72, 26)" stroke-width="0.7"/>
<path d="M376.6,77.3 L364.1,113.4 L377.6,81.4Z" fill="rgb(156, 75, 27)" stroke="rgb(124, 60, 21)" stroke-width="0.7"/>
<path d="M377.6,81.4 L364.1,113.4 L363.6,120.3Z" fill="rgb(148, 72, 26)" stroke="rgb(118, 57, 20)" stroke-width="0.7"/>
<path d="M410.4,203.6 L429.0,225.9 L427.8,195.3Z" fill="rgb(172, 83, 30)" stroke="rgb(137, 66, 24)" stroke-width="0.7"/>
<path d="M388.7,198.3 L408.3,235.8 L429.0,225.9Z" fill="rgb(181, 87, 31)" stroke="rgb(144, 69, 24)" stroke-width="0.7"/>
<path d="M364.7,199.1 L383.9,228.2 L388.7,198.3Z" fill="rgb(189, 91, 33)" stroke="rgb(151, 72, 26)" stroke-width="0.7"/>
<path d="M420.3,126.9 L444.6,149.4 L432.5,123.6Z" fill="rgb(171, 83, 30)" stroke="rgb(136, 66, 24)" stroke-width="0.7"/>
<path d="M364.9,157.6 L364.7,199.1 L388.7,198.3Z" fill="rgb(194, 94, 34)" stroke="rgb(155, 75, 27)" stroke-width="0.7"/>
<path d="M388.7,198.3 L383.9,228.2 L408.3,235.8Z" fill="rgb(187, 90, 32)" stroke="rgb(149, 72, 25)" stroke-width="0.7"/>
<path d="M388.7,198.3 L429.0,225.9 L410.4,203.6Z" fill="rgb(158, 76, 27)" stroke="rgb(126, 60, 21)" stroke-width="0.7"/>
<path d="M363.6,120.3 L364.9,157.6 L374.3,124.6Z" fill="rgb(184, 89, 32)" stroke="rgb(147, 71, 25)" stroke-width="0.7"/>
<path d="M364.9,157.6 L388.7,198.3 L374.3,165.7Z" fill="rgb(152, 73, 26)" stroke="rgb(121, 58, 20)" stroke-width="0.7"/>
<path d="M420.3,126.9 L424.6,162.0 L442.3,158.8Z" fill="rgb(186, 90, 32)" stroke="rgb(148, 72, 25)" stroke-width="0.7"/>
<path d="M374.3,124.6 L364.9,157.6 L374.3,165.7Z" fill="rgb(172, 83, 30)" stroke="rgb(137, 66, 24)" stroke-width="0.7"/>
<path d="M410.8,168.5 L427.8,195.3 L424.6,162.0Z" fill="rgb(174, 84, 30)" stroke="rgb(139, 67, 24)" stroke-width="0.7"/>
<path d="M377.6,81.4 L363.6,120.3 L374.3,124.6Z" fill="rgb(187, 90, 32)" stroke="rgb(149, 72, 25)" stroke-width="0.7"/>
<path d="M393.1,165.2 L410.4,203.6 L427.8,195.3Z" fill="rgb(181, 87, 31)" stroke="rgb(144, 69, 24)" stroke-width="0.7"/>
<path d="M420.2,86.5 L434.7,116.8 L422.0,82.5Z" fill="rgb(149, 72, 26)" stroke="rgb(119, 57, 20)" stroke-width="0.7"/>
<path d="M393.1,165.2 L427.8,195.3 L410.8,168.5Z" fill="rgb(171, 82, 30)" stroke="rgb(136, 65, 24)" stroke-width="0.7"/>
<path d="M374.3,165.7 L388.7,198.3 L393.1,165.2Z" fill="rgb(191, 92, 33)" stroke="rgb(152, 73, 26)" stroke-width="0.7"/>
<path d="M413.6,89.0 L432.5,123.6 L434.7,116.8Z" fill="rgb(150, 73, 26)" stroke="rgb(120, 58, 20)" stroke-width="0.7"/>
<path d="M393.1,165.2 L388.7,198.3 L410.4,203.6Z" fill="rgb(189, 91, 33)" stroke="rgb(151, 72, 26)" stroke-width="0.7"/>
<path d="M374.3,124.6 L374.3,165.7 L393.1,165.2Z" fill="rgb(194, 94, 34)" stroke="rgb(155, 75, 27)" stroke-width="0.7"/>
<path d="M393.9,44.2 L376.6,77.3 L377.6,81.4Z" fill="rgb(158, 76, 27)" stroke="rgb(126, 60, 21)" stroke-width="0.7"/>
<path d="M377.6,81.4 L374.3,124.6 L378.7,85.5Z" fill="rgb(150, 72, 26)" stroke="rgb(120, 57, 20)" stroke-width="0.7"/>
<path d="M413.6,89.0 L434.7,116.8 L420.2,86.5Z" fill="rgb(174, 84, 30)" stroke="rgb(139, 67, 24)" stroke-width="0.7"/>
<path d="M374.3,124.6 L393.1,165.2 L382.7,130.0Z" fill="rgb(165, 80, 29)" stroke="rgb(132, 64, 23)" stroke-width="0.7"/>
<path d="M409.9,131.4 L424.6,162.0 L420.3,126.9Z" fill="rgb(175, 84, 30)" stroke="rgb(140, 67, 24)" stroke-width="0.7"/>
<path d="M396.5,129.9 L410.8,168.5 L424.6,162.0Z" fill="rgb(179, 87, 31)" stroke="rgb(143, 69, 24)" stroke-width="0.7"/>
<path d="M406.9,46.6 L422.0,82.5 L423.8,78.5Z" fill="rgb(150, 72, 26)" stroke="rgb(120, 57, 20)" stroke-width="0.7"/>
<path d="M413.6,89.0 L420.3,126.9 L432.5,123.6Z" fill="rgb(184, 89, 32)" stroke="rgb(147, 71, 25)" stroke-width="0.7"/>
<path d="M396.5,129.9 L424.6,162.0 L409.9,131.4Z" fill="rgb(180, 87, 31)" stroke="rgb(144, 69, 24)" stroke-width="0.7"/>
<path d="M396.5,129.9 L393.1,165.2 L410.8,168.5Z" fill="rgb(190, 92, 33)" stroke="rgb(152, 73, 26)" stroke-width="0.7"/>
<path d="M378.7,85.5 L374.3,124.6 L384.7,88.3Z" fill="rgb(183, 88, 32)" stroke="rgb(146, 70, 25)" stroke-width="0.7"/>
<path d="M382.7,130.0 L393.1,165.2 L396.5,129.9Z" fill="rgb(191, 92, 33)" stroke="rgb(152, 73, 26)" stroke-width="0.7"/>
<path d="M384.7,88.3 L374.3,124.6 L382.7,130.0Z" fill="rgb(178, 86, 31)" stroke="rgb(142, 68, 24)" stroke-width="0.7"/>
<path d="M393.1,46.6 L377.6,81.4 L378.7,85.5Z" fill="rgb(157, 76, 27)" stroke="rgb(125, 60, 21)" stroke-width="0.7"/>
<path d="M384.7,88.3 L382.7,130.0 L396.5,129.9Z" fill="rgb(194, 94, 34)" stroke="rgb(155, 75, 27)" stroke-width="0.7"/>
<path d="M404.5,48.7 L420.2,86.5 L422.0,82.5Z" fill="rgb(151, 73, 26)" stroke="rgb(120, 58, 20)" stroke-width="0.7"/>
<path d="M398.9,91.3 L409.9,131.4 L420.3,126.9Z" fill="rgb(179, 86, 31)" stroke="rgb(143, 68, 24)" stroke-width="0.7"/>
<path d="M407.1,91.5 L420.3,126.9 L413.6,89.0Z" fill="rgb(179, 86, 31)" stroke="rgb(143, 68, 24)" stroke-width="0.7"/>
<path d="M393.1,46.6 L378.7,85.5 L384.7,88.3Z" fill="rgb(184, 89, 32)" stroke="rgb(147, 71, 25)" stroke-width="0.7"/>
<path d="M384.7,88.3 L396.5,129.9 L390.7,91.1Z" fill="rgb(178, 86, 31)" stroke="rgb(142, 68, 24)" stroke-width="0.7"/>
<path d="M398.9,91.3 L420.3,126.9 L407.1,91.5Z" fill="rgb(188, 91, 33)" stroke="rgb(150, 72, 26)" stroke-width="0.7"/>
<path d="M398.9,91.3 L396.5,129.9 L409.9,131.4Z" fill="rgb(192, 93, 33)" stroke="rgb(153, 74, 26)" stroke-width="0.7"/>
<path d="M404.5,48.7 L413.6,89.0 L420.2,86.5Z" fill="rgb(179, 87, 31)" stroke="rgb(143, 69, 24)" stroke-width="0.7"/>
<path d="M390.7,91.1 L396.5,129.9 L398.9,91.3Z" fill="rgb(192, 93, 33)" stroke="rgb(153, 74, 26)" stroke-width="0.7"/>
<path d="M395.5,48.7 L384.7,88.3 L390.7,91.1Z" fill="rgb(184, 89, 32)" stroke="rgb(147, 71, 25)" stroke-width="0.7"/>
<path d="M400.0,49.5 L407.1,91.5 L413.6,89.0Z" fill="rgb(180, 87, 31)" stroke="rgb(144, 69, 24)" stroke-width="0.7"/>
<path d="M395.5,48.7 L390.7,91.1 L398.9,91.3Z" fill="rgb(193, 93, 33)" stroke="rgb(154, 74, 26)" stroke-width="0.7"/>
<path d="M400.0,49.5 L398.9,91.3 L407.1,91.5Z" fill="rgb(193, 93, 33)" stroke="rgb(154, 74, 26)" stroke-width="0.7"/>
<rect x="300" y="40" width="200" height="290" fill="url(#ll)"/>
<rect x="300" y="40" width="200" height="290" fill="url(#dg)"/>
<clipPath id="st1"><path d="M366,209 L387,209 L377,170Z"/></clipPath><path clip-path="url(#st1)" d="M322.8,201.9 L364.1,135.8 M325.0,203.3 L366.3,137.1 M327.2,204.7 L368.5,138.5 M329.4,206.0 L370.7,139.9 M331.6,207.4 L372.9,141.3 M333.8,208.8 L375.1,142.6 M336.0,210.2 L377.3,144.0 M338.2,211.6 L379.5,145.4 M340.4,212.9 L381.7,146.8 M342.6,214.3 L383.9,148.2 M344.8,215.7 L386.1,149.5 M347.0,217.1 L388.3,150.9 M349.2,218.4 L390.6,152.3 M351.4,219.8 L392.8,153.7 M353.6,221.2 L395.0,155.0 M355.8,222.6 L397.2,156.4 M358.0,224.0 L399.4,157.8 M360.2,225.3 L401.6,159.2 M362.4,226.7 L403.8,160.6 M364.7,228.1 L406.0,161.9 M366.9,229.5 L408.2,163.3 M369.1,230.8 L410.4,164.7 M371.3,232.2 L412.6,166.1 M373.5,233.6 L414.8,167.4 M375.7,235.0 L417.0,168.8 M377.9,236.4 L419.2,170.2 M380.1,237.7 L421.4,171.6 M382.3,239.1 L423.6,173.0 M384.5,240.5 L425.8,174.3 M386.7,241.9 L428.0,175.7" stroke="#eea458" stroke-width="0.9" opacity="0.55"/>
<clipPath id="st2"><path d="M412,208 L441,208 L424,169Z"/></clipPath><path clip-path="url(#st2)" d="M372.8,200.9 L414.1,134.8 M375.0,202.3 L416.3,136.1 M377.2,203.7 L418.5,137.5 M379.4,205.0 L420.7,138.9 M381.6,206.4 L422.9,140.3 M383.8,207.8 L425.1,141.6 M386.0,209.2 L427.3,143.0 M388.2,210.6 L429.5,144.4 M390.4,211.9 L431.7,145.8 M392.6,213.3 L433.9,147.2 M394.8,214.7 L436.1,148.5 M397.0,216.1 L438.3,149.9 M399.2,217.4 L440.6,151.3 M401.4,218.8 L442.8,152.7 M403.6,220.2 L445.0,154.0 M405.8,221.6 L447.2,155.4 M408.0,223.0 L449.4,156.8 M410.2,224.3 L451.6,158.2 M412.4,225.7 L453.8,159.6 M414.7,227.1 L456.0,160.9 M416.9,228.5 L458.2,162.3 M419.1,229.8 L460.4,163.7 M421.3,231.2 L462.6,165.1 M423.5,232.6 L464.8,166.4 M425.7,234.0 L467.0,167.8 M427.9,235.4 L469.2,169.2 M430.1,236.7 L471.4,170.6 M432.3,238.1 L473.6,172.0 M434.5,239.5 L475.8,173.3 M436.7,240.9 L478.0,174.7" stroke="#eea458" stroke-width="0.9" opacity="0.55"/>
<clipPath id="st3"><path d="M346,250 L373,250 L362,211Z"/></clipPath><path clip-path="url(#st3)" d="M304.6,235.3 L354.7,175.6 M306.5,237.0 L356.7,177.2 M308.5,238.6 L358.7,178.9 M310.5,240.3 L360.7,180.6 M312.5,242.0 L362.7,182.2 M314.5,243.7 L364.7,183.9 M316.5,245.3 L366.6,185.6 M318.5,247.0 L368.6,187.3 M320.5,248.7 L370.6,188.9 M322.5,250.3 L372.6,190.6 M324.5,252.0 L374.6,192.3 M326.5,253.7 L376.6,193.9 M328.5,255.4 L378.6,195.6 M330.4,257.0 L380.6,197.3 M332.4,258.7 L382.6,199.0 M334.4,260.4 L384.6,200.6 M336.4,262.0 L386.6,202.3 M338.4,263.7 L388.6,204.0 M340.4,265.4 L390.5,205.6 M342.4,267.1 L392.5,207.3 M344.4,268.7 L394.5,209.0 M346.4,270.4 L396.5,210.7 M348.4,272.1 L398.5,212.3 M350.4,273.7 L400.5,214.0 M352.4,275.4 L402.5,215.7 M354.3,277.1 L404.5,217.3 M356.3,278.8 L406.5,219.0 M358.3,280.4 L408.5,220.7 M360.3,282.1 L410.5,222.4 M362.3,283.8 L412.5,224.0" stroke="#eea458" stroke-width="0.9" opacity="0.55"/>
<clipPath id="st4"><path d="M440,250 L468,248 L451,211Z"/></clipPath><path clip-path="url(#st4)" d="M458.8,175.6 L508.9,235.3 M456.8,177.2 L507.0,237.0 M454.8,178.9 L505.0,238.6 M452.8,180.6 L503.0,240.3 M450.8,182.2 L501.0,242.0 M448.8,183.9 L499.0,243.7 M446.9,185.6 L497.0,245.3 M444.9,187.3 L495.0,247.0 M442.9,188.9 L493.0,248.7 M440.9,190.6 L491.0,250.3 M438.9,192.3 L489.0,252.0 M436.9,193.9 L487.0,253.7 M434.9,195.6 L485.0,255.4 M432.9,197.3 L483.1,257.0 M430.9,199.0 L481.1,258.7 M428.9,200.6 L479.1,260.4 M426.9,202.3 L477.1,262.0 M424.9,204.0 L475.1,263.7 M423.0,205.6 L473.1,265.4 M421.0,207.3 L471.1,267.1 M419.0,209.0 L469.1,268.7 M417.0,210.7 L467.1,270.4 M415.0,212.3 L465.1,272.1 M413.0,214.0 L463.1,273.7 M411.0,215.7 L461.1,275.4 M409.0,217.3 L459.2,277.1 M407.0,219.0 L457.2,278.8 M405.0,220.7 L455.2,280.4 M403.0,222.4 L453.2,282.1 M401.0,224.0 L451.2,283.8" stroke="#eea458" stroke-width="0.9" opacity="0.55"/>
<clipPath id="st5"><path d="M359,291 L383,291 L378,254Z"/></clipPath><path clip-path="url(#st5)" d="M320.5,286.0 L357.5,222.0 M322.7,287.3 L359.7,223.3 M325.0,288.6 L362.0,224.6 M327.2,289.9 L364.2,225.9 M329.5,291.2 L366.5,227.2 M331.7,292.5 L368.7,228.5 M334.0,293.8 L371.0,229.8 M336.2,295.1 L373.2,231.1 M338.5,296.4 L375.5,232.4 M340.7,297.7 L377.7,233.7 M343.0,299.0 L380.0,235.0 M345.2,300.3 L382.2,236.3 M347.5,301.6 L384.5,237.6 M349.7,302.9 L386.7,238.9 M352.0,304.2 L389.0,240.2 M354.2,305.5 L391.2,241.5 M356.5,306.8 L393.5,242.8 M358.7,308.1 L395.7,244.1 M361.0,309.4 L398.0,245.4 M363.2,310.7 L400.2,246.7 M365.5,312.0 L402.5,248.0 M367.7,313.3 L404.7,249.3 M370.0,314.6 L407.0,250.6 M372.2,315.9 L409.2,251.9 M374.5,317.2 L411.5,253.2 M376.7,318.5 L413.7,254.5 M379.0,319.8 L416.0,255.8 M381.3,321.1 L418.3,257.1 M383.5,322.4 L420.5,258.4" stroke="#eea458" stroke-width="0.9" opacity="0.45"/>
<clipPath id="st6"><path d="M417,291 L442,289 L421,254Z"/></clipPath><path clip-path="url(#st6)" d="M443.0,222.0 L480.0,286.0 M440.8,223.3 L477.8,287.3 M438.5,224.6 L475.5,288.6 M436.3,225.9 L473.3,289.9 M434.0,227.2 L471.0,291.2 M431.8,228.5 L468.8,292.5 M429.5,229.8 L466.5,293.8 M427.3,231.1 L464.3,295.1 M425.0,232.4 L462.0,296.4 M422.8,233.7 L459.8,297.7 M420.5,235.0 L457.5,299.0 M418.3,236.3 L455.3,300.3 M416.0,237.6 L453.0,301.6 M413.8,238.9 L450.8,302.9 M411.5,240.2 L448.5,304.2 M409.3,241.5 L446.3,305.5 M407.0,242.8 L444.0,306.8 M404.8,244.1 L441.8,308.1 M402.5,245.4 L439.5,309.4 M400.3,246.7 L437.3,310.7 M398.0,248.0 L435.0,312.0 M395.8,249.3 L432.8,313.3 M393.5,250.6 L430.5,314.6 M391.3,251.9 L428.3,315.9 M389.0,253.2 L426.0,317.2 M386.8,254.5 L423.8,318.5 M384.5,255.8 L421.5,319.8 M382.2,257.1 L419.2,321.1 M380.0,258.4 L417.0,322.4" stroke="#eea458" stroke-width="0.9" opacity="0.45"/>
<clipPath id="st7"><path d="M343,201 L364,201 L358,174Z"/></clipPath><path clip-path="url(#st7)" d="M315.3,187.5 L353.5,149.3 M317.2,189.3 L355.3,151.2 M319.0,191.2 L357.2,153.0 M320.8,193.0 L359.0,154.8 M322.7,194.9 L360.9,156.7 M324.5,196.7 L362.7,158.5 M326.3,198.5 L364.5,160.3 M328.2,200.4 L366.4,162.2 M330.0,202.2 L368.2,164.0 M331.9,204.0 L370.0,165.9 M333.7,205.9 L371.9,167.7 M335.5,207.7 L373.7,169.5 M337.4,209.6 L375.6,171.4 M339.2,211.4 L377.4,173.2 M341.1,213.2 L379.2,175.1 M342.9,215.1 L381.1,176.9 M344.7,216.9 L382.9,178.7 M346.6,218.8 L384.8,180.6 M348.4,220.6 L386.6,182.4 M350.2,222.4 L388.4,184.2 M352.1,224.3 L390.3,186.1" stroke="#eea458" stroke-width="0.9" opacity="0.45"/>
<clipPath id="st8"><path d="M436,200 L458,200 L443,173Z"/></clipPath><path clip-path="url(#st8)" d="M447.0,148.3 L485.2,186.5 M445.2,150.2 L483.3,188.3 M443.3,152.0 L481.5,190.2 M441.5,153.8 L479.7,192.0 M439.6,155.7 L477.8,193.9 M437.8,157.5 L476.0,195.7 M436.0,159.3 L474.2,197.5 M434.1,161.2 L472.3,199.4 M432.3,163.0 L470.5,201.2 M430.5,164.9 L468.6,203.0 M428.6,166.7 L466.8,204.9 M426.8,168.5 L465.0,206.7 M424.9,170.4 L463.1,208.6 M423.1,172.2 L461.3,210.4 M421.3,174.1 L459.4,212.2 M419.4,175.9 L457.6,214.1 M417.6,177.7 L455.8,215.9 M415.7,179.6 L453.9,217.8 M413.9,181.4 L452.1,219.6 M412.1,183.2 L450.3,221.4 M410.2,185.1 L448.4,223.3" stroke="#eea458" stroke-width="0.9" opacity="0.45"/>
<clipPath id="st9"><path d="M372,160 L388,160 L382,140Z"/></clipPath><path clip-path="url(#st9)" d="M352.7,157.3 L372.7,122.7 M354.9,158.6 L374.9,124.0 M357.2,159.9 L377.2,125.3 M359.4,161.2 L379.4,126.6 M361.7,162.5 L381.7,127.9 M363.9,163.8 L383.9,129.2 M366.2,165.1 L386.2,130.5 M368.4,166.4 L388.4,131.8 M370.7,167.7 L390.7,133.1 M372.9,169.0 L392.9,134.4 M375.2,170.3 L395.2,135.7 M377.4,171.6 L397.4,137.0 M379.7,172.9 L399.7,138.3 M382.0,174.2 L402.0,139.6 M384.2,175.5 L404.2,140.9 M386.5,176.8 L406.5,142.2" stroke="#eea458" stroke-width="0.9" opacity="0.4"/>
<clipPath id="st10"><path d="M413,160 L429,160 L418,140Z"/></clipPath><path clip-path="url(#st10)" d="M428.3,122.7 L448.3,157.3 M426.1,124.0 L446.1,158.6 M423.8,125.3 L443.8,159.9 M421.6,126.6 L441.6,161.2 M419.3,127.9 L439.3,162.5 M417.1,129.2 L437.1,163.8 M414.8,130.5 L434.8,165.1 M412.6,131.8 L432.6,166.4 M410.3,133.1 L430.3,167.7 M408.1,134.4 L428.1,169.0 M405.8,135.7 L425.8,170.3 M403.6,137.0 L423.6,171.6 M401.3,138.3 L421.3,172.9 M399.0,139.6 L419.0,174.2 M396.8,140.9 L416.8,175.5 M394.5,142.2 L414.5,176.8" stroke="#eea458" stroke-width="0.9" opacity="0.4"/></g>
  <!-- origin square -->
  <path d="M70.89,443.4 L110.17,443.25 L110.7,443.24 L113.16,443.42 L115.34,444.08 L117.02,445.15 L118.04,446.53 L118.31,448.08 L115.02,489.95 L71.67,490.88 L71.95,490.87 L69.56,490.62 L67.61,489.8 L66.39,488.52 L66.08,486.99 Z" fill="#cfd0cf"/>
  <path d="M91.93,493.7 L96.77,443.76 M64.04,473.48 L118.43,472.1 M65.97,456.32 L119.87,454.97" stroke="#6a6a6c" stroke-width="0.9"/>
  <!-- axes -->
  <line x1="65.2" y1="491.9" x2="60" y2="434" stroke="#1010c0" stroke-width="2"/>
  <polygon points="59.1,426.9 56,438 62.5,437.5" fill="#1010c0"/>
  <line x1="65.2" y1="491.9" x2="70" y2="447" stroke="#10b010" stroke-width="2"/>
  <polygon points="70.6,440.6 67.5,449 73.5,449" fill="#10b010"/>
  <line x1="65.2" y1="491.9" x2="140" y2="489.6" stroke="#d01010" stroke-width="2"/>
  <polygon points="148.6,489.6 137,486 137.5,493" fill="#d01010"/>
</svg>
<div id="ptext" class="abs"><svg width="256" height="256" style="position:absolute;left:0;top:0;overflow:visible"><path d="M18.80,16.82 L18.80,22.53 L17.92,23.48 L15.28,23.48 L14.40,22.53 L13.52,23.48 L10.88,23.48 L10.00,22.53 L10.00,16.82 L18.80,16.82 M14.40,16.82 L14.40,22.53 M16.60,26.16 L16.60,29.88 L10.00,29.88 L10.00,25.82 L13.26,25.82 L13.26,29.88 M10.00,34.73 L16.60,34.73 L16.60,41.77 L10.00,41.77 M16.60,38.25 L10.00,38.25 M18.80,44.62 L10.00,44.62 L10.00,49.58 L16.60,49.58 L16.60,44.62 M16.60,51.83 L10.00,51.83 L10.00,56.58 L16.60,56.58 M18.80,62.42 L18.80,69.17 M18.80,65.80 L10.00,65.80 M10.00,78.38 L10.00,71.72 L16.60,71.72 L16.60,78.38 L13.26,78.38 L13.26,71.72 M16.60,80.83 L10.00,86.08 M16.60,86.08 L10.00,80.83 M18.54,88.45 L10.00,88.45 L10.00,91.78 M16.60,87.03 L16.60,91.78 M16.60,94.42 L10.00,94.42 L10.00,98.78 L16.60,98.78 M10.00,100.53 L16.60,100.53 L16.60,102.78 L15.10,102.78 M10.00,109.38 L10.00,105.12 L16.60,105.12 L16.60,109.38 L13.26,109.38 L13.26,105.12 M18.80,117.97 L10.00,117.97 L10.00,111.83 L16.60,111.83 L16.60,117.97 M10.00,121.42 L18.80,121.42 L18.80,128.38 L14.40,128.38 L14.40,121.42 M18.80,136.78 L18.80,130.72 L10.00,130.72 L10.00,136.78 M14.40,130.72 L14.40,135.77 M18.80,139.65 L10.00,139.65 M10.00,144.62 L18.80,144.62 L18.80,152.28 L14.40,152.28 L14.40,144.62 M18.80,154.64 L10.00,154.64 L10.00,158.28 M16.60,160.47 L16.60,164.28 L10.00,164.28 L10.00,160.12 L13.26,160.12 L13.26,164.28 M18.54,167.24 L10.00,167.24 L10.00,170.07 M16.60,166.03 L16.60,170.07 M10.00,176.47 L10.00,172.43 L16.60,172.43 L16.60,176.47 L13.26,176.47 L13.26,172.43" fill="none" stroke="#cbcbcb" stroke-width="1.25" stroke-linejoin="miter" stroke-linecap="butt"/></svg></div>

<div id="thumb" class="abs"></div>
<div id="thumbin" class="abs"><span>1</span></div>
<svg class="abs" style="left:0;top:0" width="70" height="75"><g transform="translate(34.1,21.4) scale(0.106,0.1) translate(-400,-44)"><clipPath id="mc"><path d="M394,44.3 L406,44.3 L408.5,52 L414,64 L421,78.8 L430.7,95 L437.4,114 L446,128 L450.8,145.9 L460.2,157.1 L459.3,163.6 L470.5,174.9 L471.4,185.1 L482.6,197.3 L479.8,203.8 L485.4,220 L483.7,226.8 L493,237 L477.7,251.4 L483.7,264.1 L476.9,269.2 L476,276 L459.9,282 L460.7,295.6 L438.7,301.5 L436,312.5 L414.3,312.5 L404,318.1 L390,311.5 L371.3,314 L367.9,306.4 L346.7,300.5 L346.7,286 L325.5,278.4 L322,266.5 L326.3,257.2 L309.3,240.9 L317,225.7 L321.2,215.5 L317,200.2 L327.2,190 L329.3,187.6 L330.5,177.4 L338.2,172.3 L338.2,157.1 L350.9,145.6 L350.9,132.9 L364,114 L370.2,95 L379,78.8 L386,64 L391.5,52 Z"/></clipPath><path d="M394,44.3 L406,44.3 L408.5,52 L414,64 L421,78.8 L430.7,95 L437.4,114 L446,128 L450.8,145.9 L460.2,157.1 L459.3,163.6 L470.5,174.9 L471.4,185.1 L482.6,197.3 L479.8,203.8 L485.4,220 L483.7,226.8 L493,237 L477.7,251.4 L483.7,264.1 L476.9,269.2 L476,276 L459.9,282 L460.7,295.6 L438.7,301.5 L436,312.5 L414.3,312.5 L404,318.1 L390,311.5 L371.3,314 L367.9,306.4 L346.7,300.5 L346.7,286 L325.5,278.4 L322,266.5 L326.3,257.2 L309.3,240.9 L317,225.7 L321.2,215.5 L317,200.2 L327.2,190 L329.3,187.6 L330.5,177.4 L338.2,172.3 L338.2,157.1 L350.9,145.6 L350.9,132.9 L364,114 L370.2,95 L379,78.8 L386,64 L391.5,52 Z" fill="#9a9a9a"/><g clip-path="url(#mc)"><path d="M399.6,206.8 L374.7,225.9 L359.1,239.3Z" fill="rgb(151, 151, 151)" stroke="rgb(120, 120, 120)" stroke-width="4"/>
<path d="M396.0,183.6 L367.7,200.4 L351.9,215.6Z" fill="rgb(161, 161, 161)" stroke="rgb(128, 128, 128)" stroke-width="4"/>
<path d="M359.1,239.3 L347.8,267.5 L350.6,279.2Z" fill="rgb(184, 184, 184)" stroke="rgb(147, 147, 147)" stroke-width="4"/>
<path d="M351.9,215.6 L329.1,243.4 L334.4,258.7Z" fill="rgb(198, 198, 198)" stroke="rgb(158, 158, 158)" stroke-width="4"/>
<path d="M393.1,163.0 L365.0,179.1 L350.1,193.4Z" fill="rgb(161, 161, 161)" stroke="rgb(128, 128, 128)" stroke-width="4"/>
<path d="M466.6,261.6 L451.0,283.9 L458.1,272.6Z" fill="rgb(129, 129, 129)" stroke="rgb(103, 103, 103)" stroke-width="4"/>
<path d="M350.1,193.4 L319.2,221.0 L326.7,237.7Z" fill="rgb(203, 203, 203)" stroke="rgb(162, 162, 162)" stroke-width="4"/>
<path d="M473.2,237.3 L466.6,261.6 L474.5,246.6Z" fill="rgb(129, 129, 129)" stroke="rgb(103, 103, 103)" stroke-width="4"/>
<path d="M319.2,221.0 L334.4,258.7 L326.7,237.7Z" fill="rgb(139, 139, 139)" stroke="rgb(111, 111, 111)" stroke-width="4"/>
<path d="M391.2,141.4 L365.0,160.0 L352.3,172.9Z" fill="rgb(157, 157, 157)" stroke="rgb(125, 125, 125)" stroke-width="4"/>
<path d="M471.1,211.7 L473.2,237.3 L480.3,220.5Z" fill="rgb(144, 144, 144)" stroke="rgb(115, 115, 115)" stroke-width="4"/>
<path d="M334.4,258.7 L336.2,288.6 L353.5,296.7Z" fill="rgb(231, 231, 231)" stroke="rgb(184, 184, 184)" stroke-width="4"/>
<path d="M336.2,288.6 L368.3,310.4 L353.5,296.7Z" fill="rgb(146, 146, 146)" stroke="rgb(116, 116, 116)" stroke-width="4"/>
<path d="M441.8,300.8 L434.2,303.4 L461.7,294.4Z" fill="rgb(129, 129, 129)" stroke="rgb(103, 103, 103)" stroke-width="4"/>
<path d="M352.3,172.9 L320.6,199.9 L327.5,215.6Z" fill="rgb(203, 203, 203)" stroke="rgb(162, 162, 162)" stroke-width="4"/>
<path d="M320.6,199.9 L326.7,237.7 L327.5,215.6Z" fill="rgb(161, 161, 161)" stroke="rgb(128, 128, 128)" stroke-width="4"/>
<path d="M463.8,186.9 L471.1,211.7 L474.5,195.7Z" fill="rgb(146, 146, 146)" stroke="rgb(116, 116, 116)" stroke-width="4"/>
<path d="M456.7,284.0 L451.0,283.9 L482.0,275.1Z" fill="rgb(129, 129, 129)" stroke="rgb(103, 103, 103)" stroke-width="4"/>
<path d="M326.7,237.7 L316.7,271.5 L340.4,281.5Z" fill="rgb(235, 235, 235)" stroke="rgb(188, 188, 188)" stroke-width="4"/>
<path d="M316.7,271.5 L353.5,296.7 L340.4,281.5Z" fill="rgb(155, 155, 155)" stroke="rgb(124, 124, 124)" stroke-width="4"/>
<path d="M456.7,284.0 L441.8,300.8 L461.7,294.4Z" fill="rgb(157, 157, 157)" stroke="rgb(125, 125, 125)" stroke-width="4"/>
<path d="M464.6,262.4 L482.0,275.1 L466.6,261.6Z" fill="rgb(137, 137, 137)" stroke="rgb(109, 109, 109)" stroke-width="4"/>
<path d="M390.6,119.0 L367.3,140.2 L356.5,150.9Z" fill="rgb(150, 150, 150)" stroke="rgb(120, 120, 120)" stroke-width="4"/>
<path d="M354.5,308.5 L383.9,319.1 L378.1,309.1Z" fill="rgb(160, 160, 160)" stroke="rgb(128, 128, 128)" stroke-width="4"/>
<path d="M413.0,310.8 L426.9,314.6 L436.4,312.3Z" fill="rgb(129, 129, 129)" stroke="rgb(103, 103, 103)" stroke-width="4"/>
<path d="M464.6,262.4 L466.6,261.6 L491.7,251.8Z" fill="rgb(129, 129, 129)" stroke="rgb(103, 103, 103)" stroke-width="4"/>
<path d="M454.7,160.7 L463.8,186.9 L464.8,172.5Z" fill="rgb(141, 141, 141)" stroke="rgb(112, 112, 112)" stroke-width="4"/>
<path d="M326.9,179.7 L327.5,215.6 L333.8,193.7Z" fill="rgb(175, 175, 175)" stroke="rgb(140, 140, 140)" stroke-width="4"/>
<path d="M356.5,150.9 L326.9,179.7 L333.8,193.7Z" fill="rgb(203, 203, 203)" stroke="rgb(162, 162, 162)" stroke-width="4"/>
<path d="M394.1,317.9 L407.0,320.7 L413.0,310.8Z" fill="rgb(139, 139, 139)" stroke="rgb(111, 111, 111)" stroke-width="4"/>
<path d="M465.1,236.5 L491.7,251.8 L473.2,237.3Z" fill="rgb(143, 143, 143)" stroke="rgb(114, 114, 114)" stroke-width="4"/>
<path d="M340.4,281.5 L354.5,308.5 L378.1,309.1Z" fill="rgb(246, 246, 246)" stroke="rgb(196, 196, 196)" stroke-width="4"/>
<path d="M327.5,215.6 L308.5,252.3 L335.8,262.8Z" fill="rgb(236, 236, 236)" stroke="rgb(188, 188, 188)" stroke-width="4"/>
<path d="M464.6,262.4 L456.7,284.0 L482.0,275.1Z" fill="rgb(184, 184, 184)" stroke="rgb(147, 147, 147)" stroke-width="4"/>
<path d="M465.1,236.5 L473.2,237.3 L488.4,225.3Z" fill="rgb(129, 129, 129)" stroke="rgb(103, 103, 103)" stroke-width="4"/>
<path d="M308.5,252.3 L340.4,281.5 L335.8,262.8Z" fill="rgb(186, 186, 186)" stroke="rgb(148, 148, 148)" stroke-width="4"/>
<path d="M420.2,298.0 L436.4,312.3 L441.8,300.8Z" fill="rgb(173, 173, 173)" stroke="rgb(138, 138, 138)" stroke-width="4"/>
<path d="M460.6,209.5 L488.4,225.3 L471.1,211.7Z" fill="rgb(143, 143, 143)" stroke="rgb(114, 114, 114)" stroke-width="4"/>
<path d="M443.7,133.4 L454.7,160.7 L453.0,148.7Z" fill="rgb(135, 135, 135)" stroke="rgb(108, 108, 108)" stroke-width="4"/>
<path d="M420.2,298.0 L413.0,310.8 L436.4,312.3Z" fill="rgb(175, 175, 175)" stroke="rgb(140, 140, 140)" stroke-width="4"/>
<path d="M460.6,209.5 L471.1,211.7 L479.8,198.8Z" fill="rgb(129, 129, 129)" stroke="rgb(103, 103, 103)" stroke-width="4"/>
<path d="M336.6,157.7 L333.8,193.7 L342.2,169.4Z" fill="rgb(178, 178, 178)" stroke="rgb(142, 142, 142)" stroke-width="4"/>
<path d="M335.8,262.8 L340.4,281.5 L343.3,297.0Z" fill="rgb(135, 135, 135)" stroke="rgb(108, 108, 108)" stroke-width="4"/>
<path d="M374.3,297.0 L378.1,309.1 L394.1,317.9Z" fill="rgb(156, 156, 156)" stroke="rgb(124, 124, 124)" stroke-width="4"/>
<path d="M465.1,236.5 L464.6,262.4 L491.7,251.8Z" fill="rgb(203, 203, 203)" stroke="rgb(162, 162, 162)" stroke-width="4"/>
<path d="M420.2,298.0 L441.8,300.8 L451.1,299.3Z" fill="rgb(129, 129, 129)" stroke="rgb(103, 103, 103)" stroke-width="4"/>
<path d="M374.3,297.0 L394.1,317.9 L413.0,310.8Z" fill="rgb(223, 223, 223)" stroke="rgb(178, 178, 178)" stroke-width="4"/>
<path d="M363.2,127.4 L336.6,157.7 L342.2,169.4Z" fill="rgb(200, 200, 200)" stroke="rgb(160, 160, 160)" stroke-width="4"/>
<path d="M343.3,297.0 L378.1,309.1 L374.3,297.0Z" fill="rgb(167, 167, 167)" stroke="rgb(133, 133, 133)" stroke-width="4"/>
<path d="M333.8,193.7 L313.3,230.1 L338.9,239.9Z" fill="rgb(236, 236, 236)" stroke="rgb(188, 188, 188)" stroke-width="4"/>
<path d="M453.9,180.5 L479.8,198.8 L463.8,186.9Z" fill="rgb(135, 135, 135)" stroke="rgb(108, 108, 108)" stroke-width="4"/>
<path d="M460.2,279.5 L456.7,284.0 L464.6,262.4Z" fill="rgb(129, 129, 129)" stroke="rgb(103, 103, 103)" stroke-width="4"/>
<path d="M313.3,230.1 L335.8,262.8 L338.9,239.9Z" fill="rgb(211, 211, 211)" stroke="rgb(168, 168, 168)" stroke-width="4"/>
<path d="M335.8,262.8 L343.3,297.0 L374.3,297.0Z" fill="rgb(246, 246, 246)" stroke="rgb(196, 196, 196)" stroke-width="4"/>
<path d="M460.6,209.5 L465.1,236.5 L488.4,225.3Z" fill="rgb(205, 205, 205)" stroke="rgb(164, 164, 164)" stroke-width="4"/>
<path d="M453.9,180.5 L463.8,186.9 L468.0,170.7Z" fill="rgb(139, 139, 139)" stroke="rgb(111, 111, 111)" stroke-width="4"/>
<path d="M396.4,308.0 L413.0,310.8 L420.2,298.0Z" fill="rgb(143, 143, 143)" stroke="rgb(114, 114, 114)" stroke-width="4"/>
<path d="M425.8,278.9 L451.1,299.3 L456.7,284.0Z" fill="rgb(182, 182, 182)" stroke="rgb(145, 145, 145)" stroke-width="4"/>
<path d="M432.8,104.6 L443.7,133.4 L440.4,124.1Z" fill="rgb(129, 129, 129)" stroke="rgb(103, 103, 103)" stroke-width="4"/>
<path d="M425.8,278.9 L456.7,284.0 L460.2,279.5Z" fill="rgb(129, 129, 129)" stroke="rgb(103, 103, 103)" stroke-width="4"/>
<path d="M444.6,149.4 L468.0,170.7 L454.7,160.7Z" fill="rgb(129, 129, 129)" stroke="rgb(103, 103, 103)" stroke-width="4"/>
<path d="M338.9,239.9 L335.8,262.8 L340.6,279.8Z" fill="rgb(161, 161, 161)" stroke="rgb(128, 128, 128)" stroke-width="4"/>
<path d="M460.8,252.5 L464.6,262.4 L465.1,236.5Z" fill="rgb(130, 130, 130)" stroke="rgb(104, 104, 104)" stroke-width="4"/>
<path d="M453.9,180.5 L460.6,209.5 L479.8,198.8Z" fill="rgb(201, 201, 201)" stroke="rgb(160, 160, 160)" stroke-width="4"/>
<path d="M348.8,133.5 L342.2,169.4 L353.0,142.6Z" fill="rgb(181, 181, 181)" stroke="rgb(144, 144, 144)" stroke-width="4"/>
<path d="M425.8,278.9 L420.2,298.0 L451.1,299.3Z" fill="rgb(208, 208, 208)" stroke="rgb(166, 166, 166)" stroke-width="4"/>
<path d="M342.2,169.4 L323.1,207.0 L346.2,215.5Z" fill="rgb(238, 238, 238)" stroke="rgb(190, 190, 190)" stroke-width="4"/>
<path d="M444.6,149.4 L454.7,160.7 L454.0,141.3Z" fill="rgb(148, 148, 148)" stroke="rgb(118, 118, 118)" stroke-width="4"/>
<path d="M323.1,207.0 L338.9,239.9 L346.2,215.5Z" fill="rgb(223, 223, 223)" stroke="rgb(178, 178, 178)" stroke-width="4"/>
<path d="M374.9,279.0 L374.3,297.0 L396.4,308.0Z" fill="rgb(189, 189, 189)" stroke="rgb(151, 151, 151)" stroke-width="4"/>
<path d="M370.7,101.5 L348.8,133.5 L353.0,142.6Z" fill="rgb(195, 195, 195)" stroke="rgb(156, 156, 156)" stroke-width="4"/>
<path d="M374.9,279.0 L396.4,308.0 L420.2,298.0Z" fill="rgb(225, 225, 225)" stroke="rgb(180, 180, 180)" stroke-width="4"/>
<path d="M340.6,279.8 L374.3,297.0 L374.9,279.0Z" fill="rgb(197, 197, 197)" stroke="rgb(157, 157, 157)" stroke-width="4"/>
<path d="M428.7,253.6 L460.2,279.5 L464.6,262.4Z" fill="rgb(183, 183, 183)" stroke="rgb(146, 146, 146)" stroke-width="4"/>
<path d="M457.5,223.8 L465.1,236.5 L460.6,209.5Z" fill="rgb(141, 141, 141)" stroke="rgb(112, 112, 112)" stroke-width="4"/>
<path d="M338.9,239.9 L340.6,279.8 L374.9,279.0Z" fill="rgb(244, 244, 244)" stroke="rgb(195, 195, 195)" stroke-width="4"/>
<path d="M428.7,253.6 L464.6,262.4 L460.8,252.5Z" fill="rgb(145, 145, 145)" stroke="rgb(116, 116, 116)" stroke-width="4"/>
<path d="M444.6,149.4 L453.9,180.5 L468.0,170.7Z" fill="rgb(195, 195, 195)" stroke="rgb(156, 156, 156)" stroke-width="4"/>
<path d="M400.5,290.5 L420.2,298.0 L425.8,278.9Z" fill="rgb(167, 167, 167)" stroke="rgb(133, 133, 133)" stroke-width="4"/>
<path d="M374.9,279.0 L420.2,298.0 L400.5,290.5Z" fill="rgb(129, 129, 129)" stroke="rgb(103, 103, 103)" stroke-width="4"/>
<path d="M346.2,215.5 L338.9,239.9 L346.6,255.6Z" fill="rgb(180, 180, 180)" stroke="rgb(144, 144, 144)" stroke-width="4"/>
<path d="M429.0,225.9 L460.8,252.5 L465.1,236.5Z" fill="rgb(183, 183, 183)" stroke="rgb(146, 146, 146)" stroke-width="4"/>
<path d="M451.1,192.4 L460.6,209.5 L453.9,180.5Z" fill="rgb(145, 145, 145)" stroke="rgb(116, 116, 116)" stroke-width="4"/>
<path d="M428.7,253.6 L425.8,278.9 L460.2,279.5Z" fill="rgb(230, 230, 230)" stroke="rgb(184, 184, 184)" stroke-width="4"/>
<path d="M353.0,142.6 L335.6,180.9 L354.9,188.1Z" fill="rgb(238, 238, 238)" stroke="rgb(190, 190, 190)" stroke-width="4"/>
<path d="M335.6,180.9 L346.2,215.5 L354.9,188.1Z" fill="rgb(226, 226, 226)" stroke="rgb(180, 180, 180)" stroke-width="4"/>
<path d="M429.0,225.9 L465.1,236.5 L457.5,223.8Z" fill="rgb(159, 159, 159)" stroke="rgb(127, 127, 127)" stroke-width="4"/>
<path d="M434.7,116.8 L443.7,133.4 L439.9,110.5Z" fill="rgb(150, 150, 150)" stroke="rgb(120, 120, 120)" stroke-width="4"/>
<path d="M361.5,106.6 L353.0,142.6 L364.1,113.4Z" fill="rgb(178, 178, 178)" stroke="rgb(142, 142, 142)" stroke-width="4"/>
<path d="M346.6,255.6 L374.9,279.0 L378.8,254.9Z" fill="rgb(223, 223, 223)" stroke="rgb(178, 178, 178)" stroke-width="4"/>
<path d="M346.2,215.5 L346.6,255.6 L378.8,254.9Z" fill="rgb(244, 244, 244)" stroke="rgb(195, 195, 195)" stroke-width="4"/>
<path d="M427.8,195.3 L457.5,223.8 L460.6,209.5Z" fill="rgb(178, 178, 178)" stroke="rgb(142, 142, 142)" stroke-width="4"/>
<path d="M434.7,116.8 L444.6,149.4 L454.0,141.3Z" fill="rgb(186, 186, 186)" stroke="rgb(148, 148, 148)" stroke-width="4"/>
<path d="M364.1,113.4 L353.0,142.6 L349.8,151.9Z" fill="rgb(146, 146, 146)" stroke="rgb(116, 116, 116)" stroke-width="4"/>
<path d="M378.8,254.9 L400.5,290.5 L425.8,278.9Z" fill="rgb(223, 223, 223)" stroke="rgb(178, 178, 178)" stroke-width="4"/>
<path d="M378.8,254.9 L374.9,279.0 L400.5,290.5Z" fill="rgb(214, 214, 214)" stroke="rgb(171, 171, 171)" stroke-width="4"/>
<path d="M427.8,195.3 L460.6,209.5 L451.1,192.4Z" fill="rgb(177, 177, 177)" stroke="rgb(141, 141, 141)" stroke-width="4"/>
<path d="M442.3,158.8 L453.9,180.5 L444.6,149.4Z" fill="rgb(150, 150, 150)" stroke="rgb(120, 120, 120)" stroke-width="4"/>
<path d="M354.9,188.1 L346.2,215.5 L355.2,229.1Z" fill="rgb(188, 188, 188)" stroke="rgb(150, 150, 150)" stroke-width="4"/>
<path d="M429.0,225.9 L428.7,253.6 L460.8,252.5Z" fill="rgb(237, 237, 237)" stroke="rgb(189, 189, 189)" stroke-width="4"/>
<path d="M404.9,264.4 L425.8,278.9 L428.7,253.6Z" fill="rgb(191, 191, 191)" stroke="rgb(152, 152, 152)" stroke-width="4"/>
<path d="M378.8,254.9 L425.8,278.9 L404.9,264.4Z" fill="rgb(138, 138, 138)" stroke="rgb(110, 110, 110)" stroke-width="4"/>
<path d="M381.0,73.9 L361.5,106.6 L364.1,113.4Z" fill="rgb(188, 188, 188)" stroke="rgb(150, 150, 150)" stroke-width="4"/>
<path d="M424.6,162.0 L451.1,192.4 L453.9,180.5Z" fill="rgb(174, 174, 174)" stroke="rgb(139, 139, 139)" stroke-width="4"/>
<path d="M349.8,151.9 L354.9,188.1 L364.9,157.6Z" fill="rgb(229, 229, 229)" stroke="rgb(183, 183, 183)" stroke-width="4"/>
<path d="M364.1,113.4 L349.8,151.9 L364.9,157.6Z" fill="rgb(237, 237, 237)" stroke="rgb(189, 189, 189)" stroke-width="4"/>
<path d="M427.8,195.3 L429.0,225.9 L457.5,223.8Z" fill="rgb(237, 237, 237)" stroke="rgb(189, 189, 189)" stroke-width="4"/>
<path d="M424.6,162.0 L453.9,180.5 L442.3,158.8Z" fill="rgb(194, 194, 194)" stroke="rgb(155, 155, 155)" stroke-width="4"/>
<path d="M354.9,188.1 L355.2,229.1 L383.9,228.2Z" fill="rgb(245, 245, 245)" stroke="rgb(196, 196, 196)" stroke-width="4"/>
<path d="M355.2,229.1 L378.8,254.9 L383.9,228.2Z" fill="rgb(233, 233, 233)" stroke="rgb(186, 186, 186)" stroke-width="4"/>
<path d="M383.9,228.2 L404.9,264.4 L428.7,253.6Z" fill="rgb(223, 223, 223)" stroke="rgb(178, 178, 178)" stroke-width="4"/>
<path d="M408.3,235.8 L428.7,253.6 L429.0,225.9Z" fill="rgb(201, 201, 201)" stroke="rgb(160, 160, 160)" stroke-width="4"/>
<path d="M383.9,228.2 L378.8,254.9 L404.9,264.4Z" fill="rgb(227, 227, 227)" stroke="rgb(181, 181, 181)" stroke-width="4"/>
<path d="M354.9,188.1 L383.9,228.2 L364.7,199.1Z" fill="rgb(142, 142, 142)" stroke="rgb(113, 113, 113)" stroke-width="4"/>
<path d="M383.9,228.2 L428.7,253.6 L408.3,235.8Z" fill="rgb(154, 154, 154)" stroke="rgb(123, 123, 123)" stroke-width="4"/>
<path d="M432.5,123.6 L444.6,149.4 L434.7,116.8Z" fill="rgb(153, 153, 153)" stroke="rgb(122, 122, 122)" stroke-width="4"/>
<path d="M364.9,157.6 L354.9,188.1 L364.7,199.1Z" fill="rgb(199, 199, 199)" stroke="rgb(159, 159, 159)" stroke-width="4"/>
<path d="M422.0,82.5 L432.8,104.6 L423.8,78.5Z" fill="rgb(150, 150, 150)" stroke="rgb(120, 120, 120)" stroke-width="4"/>
<path d="M422.0,82.5 L434.7,116.8 L439.9,110.5Z" fill="rgb(177, 177, 177)" stroke="rgb(141, 141, 141)" stroke-width="4"/>
<path d="M420.3,126.9 L442.3,158.8 L444.6,149.4Z" fill="rgb(167, 167, 167)" stroke="rgb(133, 133, 133)" stroke-width="4"/>
<path d="M424.6,162.0 L427.8,195.3 L451.1,192.4Z" fill="rgb(236, 236, 236)" stroke="rgb(188, 188, 188)" stroke-width="4"/>
<path d="M376.6,77.3 L364.1,113.4 L377.6,81.4Z" fill="rgb(175, 175, 175)" stroke="rgb(140, 140, 140)" stroke-width="4"/>
<path d="M377.6,81.4 L364.1,113.4 L363.6,120.3Z" fill="rgb(161, 161, 161)" stroke="rgb(128, 128, 128)" stroke-width="4"/>
<path d="M410.4,203.6 L429.0,225.9 L427.8,195.3Z" fill="rgb(205, 205, 205)" stroke="rgb(164, 164, 164)" stroke-width="4"/>
<path d="M388.7,198.3 L408.3,235.8 L429.0,225.9Z" fill="rgb(221, 221, 221)" stroke="rgb(176, 176, 176)" stroke-width="4"/>
<path d="M364.7,199.1 L383.9,228.2 L388.7,198.3Z" fill="rgb(237, 237, 237)" stroke="rgb(189, 189, 189)" stroke-width="4"/>
<path d="M420.3,126.9 L444.6,149.4 L432.5,123.6Z" fill="rgb(203, 203, 203)" stroke="rgb(162, 162, 162)" stroke-width="4"/>
<path d="M364.9,157.6 L364.7,199.1 L388.7,198.3Z" fill="rgb(246, 246, 246)" stroke="rgb(196, 196, 196)" stroke-width="4"/>
<path d="M388.7,198.3 L383.9,228.2 L408.3,235.8Z" fill="rgb(232, 232, 232)" stroke="rgb(185, 185, 185)" stroke-width="4"/>
<path d="M388.7,198.3 L429.0,225.9 L410.4,203.6Z" fill="rgb(178, 178, 178)" stroke="rgb(142, 142, 142)" stroke-width="4"/>
<path d="M363.6,120.3 L364.9,157.6 L374.3,124.6Z" fill="rgb(227, 227, 227)" stroke="rgb(181, 181, 181)" stroke-width="4"/>
<path d="M364.9,157.6 L388.7,198.3 L374.3,165.7Z" fill="rgb(168, 168, 168)" stroke="rgb(134, 134, 134)" stroke-width="4"/>
<path d="M420.3,126.9 L424.6,162.0 L442.3,158.8Z" fill="rgb(231, 231, 231)" stroke="rgb(184, 184, 184)" stroke-width="4"/>
<path d="M374.3,124.6 L364.9,157.6 L374.3,165.7Z" fill="rgb(205, 205, 205)" stroke="rgb(164, 164, 164)" stroke-width="4"/>
<path d="M410.8,168.5 L427.8,195.3 L424.6,162.0Z" fill="rgb(208, 208, 208)" stroke="rgb(166, 166, 166)" stroke-width="4"/>
<path d="M377.6,81.4 L363.6,120.3 L374.3,124.6Z" fill="rgb(233, 233, 233)" stroke="rgb(186, 186, 186)" stroke-width="4"/>
<path d="M393.1,165.2 L410.4,203.6 L427.8,195.3Z" fill="rgb(221, 221, 221)" stroke="rgb(176, 176, 176)" stroke-width="4"/>
<path d="M420.2,86.5 L434.7,116.8 L422.0,82.5Z" fill="rgb(162, 162, 162)" stroke="rgb(129, 129, 129)" stroke-width="4"/>
<path d="M393.1,165.2 L427.8,195.3 L410.8,168.5Z" fill="rgb(202, 202, 202)" stroke="rgb(161, 161, 161)" stroke-width="4"/>
<path d="M374.3,165.7 L388.7,198.3 L393.1,165.2Z" fill="rgb(239, 239, 239)" stroke="rgb(191, 191, 191)" stroke-width="4"/>
<path d="M413.6,89.0 L432.5,123.6 L434.7,116.8Z" fill="rgb(165, 165, 165)" stroke="rgb(132, 132, 132)" stroke-width="4"/>
<path d="M393.1,165.2 L388.7,198.3 L410.4,203.6Z" fill="rgb(237, 237, 237)" stroke="rgb(189, 189, 189)" stroke-width="4"/>
<path d="M374.3,124.6 L374.3,165.7 L393.1,165.2Z" fill="rgb(246, 246, 246)" stroke="rgb(196, 196, 196)" stroke-width="4"/>
<path d="M393.9,44.2 L376.6,77.3 L377.6,81.4Z" fill="rgb(179, 179, 179)" stroke="rgb(143, 143, 143)" stroke-width="4"/>
<path d="M377.6,81.4 L374.3,124.6 L378.7,85.5Z" fill="rgb(164, 164, 164)" stroke="rgb(131, 131, 131)" stroke-width="4"/>
<path d="M413.6,89.0 L434.7,116.8 L420.2,86.5Z" fill="rgb(208, 208, 208)" stroke="rgb(166, 166, 166)" stroke-width="4"/>
<path d="M374.3,124.6 L393.1,165.2 L382.7,130.0Z" fill="rgb(192, 192, 192)" stroke="rgb(153, 153, 153)" stroke-width="4"/>
<path d="M409.9,131.4 L424.6,162.0 L420.3,126.9Z" fill="rgb(210, 210, 210)" stroke="rgb(168, 168, 168)" stroke-width="4"/>
<path d="M396.5,129.9 L410.8,168.5 L424.6,162.0Z" fill="rgb(218, 218, 218)" stroke="rgb(174, 174, 174)" stroke-width="4"/>
<path d="M406.9,46.6 L422.0,82.5 L423.8,78.5Z" fill="rgb(164, 164, 164)" stroke="rgb(131, 131, 131)" stroke-width="4"/>
<path d="M413.6,89.0 L420.3,126.9 L432.5,123.6Z" fill="rgb(226, 226, 226)" stroke="rgb(180, 180, 180)" stroke-width="4"/>
<path d="M396.5,129.9 L424.6,162.0 L409.9,131.4Z" fill="rgb(220, 220, 220)" stroke="rgb(176, 176, 176)" stroke-width="4"/>
<path d="M396.5,129.9 L393.1,165.2 L410.8,168.5Z" fill="rgb(239, 239, 239)" stroke="rgb(191, 191, 191)" stroke-width="4"/>
<path d="M378.7,85.5 L374.3,124.6 L384.7,88.3Z" fill="rgb(226, 226, 226)" stroke="rgb(180, 180, 180)" stroke-width="4"/>
<path d="M382.7,130.0 L393.1,165.2 L396.5,129.9Z" fill="rgb(240, 240, 240)" stroke="rgb(192, 192, 192)" stroke-width="4"/>
<path d="M384.7,88.3 L374.3,124.6 L382.7,130.0Z" fill="rgb(216, 216, 216)" stroke="rgb(172, 172, 172)" stroke-width="4"/>
<path d="M393.1,46.6 L377.6,81.4 L378.7,85.5Z" fill="rgb(177, 177, 177)" stroke="rgb(141, 141, 141)" stroke-width="4"/>
<path d="M384.7,88.3 L382.7,130.0 L396.5,129.9Z" fill="rgb(245, 245, 245)" stroke="rgb(196, 196, 196)" stroke-width="4"/>
<path d="M404.5,48.7 L420.2,86.5 L422.0,82.5Z" fill="rgb(166, 166, 166)" stroke="rgb(132, 132, 132)" stroke-width="4"/>
<path d="M398.9,91.3 L409.9,131.4 L420.3,126.9Z" fill="rgb(218, 218, 218)" stroke="rgb(174, 174, 174)" stroke-width="4"/>
<path d="M407.1,91.5 L420.3,126.9 L413.6,89.0Z" fill="rgb(217, 217, 217)" stroke="rgb(173, 173, 173)" stroke-width="4"/>
<path d="M393.1,46.6 L378.7,85.5 L384.7,88.3Z" fill="rgb(228, 228, 228)" stroke="rgb(182, 182, 182)" stroke-width="4"/>
<path d="M384.7,88.3 L396.5,129.9 L390.7,91.1Z" fill="rgb(217, 217, 217)" stroke="rgb(173, 173, 173)" stroke-width="4"/>
<path d="M398.9,91.3 L420.3,126.9 L407.1,91.5Z" fill="rgb(234, 234, 234)" stroke="rgb(187, 187, 187)" stroke-width="4"/>
<path d="M398.9,91.3 L396.5,129.9 L409.9,131.4Z" fill="rgb(242, 242, 242)" stroke="rgb(193, 193, 193)" stroke-width="4"/>
<path d="M404.5,48.7 L413.6,89.0 L420.2,86.5Z" fill="rgb(218, 218, 218)" stroke="rgb(174, 174, 174)" stroke-width="4"/>
<path d="M390.7,91.1 L396.5,129.9 L398.9,91.3Z" fill="rgb(242, 242, 242)" stroke="rgb(193, 193, 193)" stroke-width="4"/>
<path d="M395.5,48.7 L384.7,88.3 L390.7,91.1Z" fill="rgb(227, 227, 227)" stroke="rgb(181, 181, 181)" stroke-width="4"/>
<path d="M400.0,49.5 L407.1,91.5 L413.6,89.0Z" fill="rgb(219, 219, 219)" stroke="rgb(175, 175, 175)" stroke-width="4"/>
<path d="M395.5,48.7 L390.7,91.1 L398.9,91.3Z" fill="rgb(244, 244, 244)" stroke="rgb(195, 195, 195)" stroke-width="4"/>
<path d="M400.0,49.5 L398.9,91.3 L407.1,91.5Z" fill="rgb(243, 243, 243)" stroke="rgb(194, 194, 194)" stroke-width="4"/></g></g></svg>
<div id="legend" class="abs"><div style="position:absolute;left:0;top:0;width:222px;height:16.5px;background:rgba(0,0,0,0.18)"></div>
<svg class="chev" width="9" height="7" viewBox="0 0 9 7"><path d="M0.8,3.3 L3.8,1 L6.8,3.3 M0.8,5.9 L3.8,3.6 L6.8,5.9" stroke="#9a9a9c" stroke-width="1" fill="none"/></svg>
<div class="t b" style="left:20.5px;top:1.4000000000000004px;">Color Scheme</div>
<div class="combo"><svg style="position:absolute;left:2px;top:3px" width="8" height="5" viewBox="0 0 8 5"><path d="M1.2,1.3 L4,3.6 L6.8,1.3" stroke="#d0d0d0" stroke-width="1" fill="none"/></svg><span>Line Type</span></div>
<div class="t b" style="left:6px;top:15.100000000000001px;">Line Type</div>
<div class="t b" style="left:73px;top:15.100000000000001px;">Time</div>
<div class="t b" style="left:106px;top:15.100000000000001px;">Percent</div>
<div class="t b" style="left:138.60000000000002px;top:15.100000000000001px;">Used filament</div>
<div class="t b" style="left:192.60000000000002px;top:15.100000000000001px;">Display</div>
<div class="sep" style="top:27.5px"></div>
<div class="sw" style="left:6px;top:30.799999999999997px;background:#f07c2a"></div>
<div class="t " style="left:15.600000000000023px;top:27.9px;">Outer wall</div>
<div class="t " style="left:73px;top:27.9px;">59m12s</div>
<div class="t " style="left:106px;top:27.9px;">86.2%</div>
<div class="t " style="left:139px;top:27.9px;">2.76 m</div>
<div class="t " style="left:164px;top:27.9px;">8.24 g</div>
<div class="cb" style="left:195px;top:29.4px"><svg width="8" height="8" viewBox="0 0 8 8"><path d="M1.3,4.2 L3.2,6 L6.8,1.8" stroke="#1fc04a" stroke-width="1.2" fill="none"/></svg></div>
<div class="sw" style="left:6px;top:41.99999999999999px;background:#9b59d0"></div>
<div class="t " style="left:15.600000000000023px;top:39.099999999999994px;">Internal solid infill</div>
<div class="t " style="left:73px;top:39.099999999999994px;">1m33s</div>
<div class="t " style="left:106px;top:39.099999999999994px;">2.3%</div>
<div class="t " style="left:139px;top:39.099999999999994px;">0.39 m</div>
<div class="t " style="left:164px;top:39.099999999999994px;">1.16 g</div>
<div class="cb" style="left:195px;top:40.599999999999994px"><svg width="8" height="8" viewBox="0 0 8 8"><path d="M1.3,4.2 L3.2,6 L6.8,1.8" stroke="#1fc04a" stroke-width="1.2" fill="none"/></svg></div>
<div class="sw" style="left:6px;top:53.199999999999996px;background:#e8413a"></div>
<div class="t " style="left:15.600000000000023px;top:50.3px;">Top surface</div>
<div class="t " style="left:73px;top:50.3px;">42s</div>
<div class="t " style="left:106px;top:50.3px;">1.0%</div>
<div class="t " style="left:139px;top:50.3px;">0.13 m</div>
<div class="t " style="left:164px;top:50.3px;">0.39 g</div>
<div class="cb" style="left:195px;top:51.8px"><svg width="8" height="8" viewBox="0 0 8 8"><path d="M1.3,4.2 L3.2,6 L6.8,1.8" stroke="#1fc04a" stroke-width="1.2" fill="none"/></svg></div>
<div class="sw" style="left:6px;top:64.4px;background:#6a5fd6"></div>
<div class="t " style="left:15.600000000000023px;top:61.5px;">Bottom surface</div>
<div class="t " style="left:73px;top:61.5px;">1m1s</div>
<div class="t " style="left:106px;top:61.5px;">1.5%</div>
<div class="t " style="left:139px;top:61.5px;">0.13 m</div>
<div class="t " style="left:164px;top:61.5px;">0.38 g</div>
<div class="cb" style="left:195px;top:63.0px"><svg width="8" height="8" viewBox="0 0 8 8"><path d="M1.3,4.2 L3.2,6 L6.8,1.8" stroke="#1fc04a" stroke-width="1.2" fill="none"/></svg></div>
<div class="sw" style="left:6px;top:75.6px;background:#ffffff"></div>
<div class="t " style="left:15.600000000000023px;top:72.69999999999999px;">Gap infill</div>
<div class="t " style="left:73px;top:72.69999999999999px;">&lt;1s</div>
<div class="t " style="left:106px;top:72.69999999999999px;">&lt;0.1%</div>
<div class="t " style="left:139px;top:72.69999999999999px;">0.00 m</div>
<div class="t " style="left:164px;top:72.69999999999999px;">0.00 g</div>
<div class="cb" style="left:195px;top:74.19999999999999px"><svg width="8" height="8" viewBox="0 0 8 8"><path d="M1.3,4.2 L3.2,6 L6.8,1.8" stroke="#1fc04a" stroke-width="1.2" fill="none"/></svg></div>
<div class="sw" style="left:6px;top:86.80000000000001px;background:#4fcf8a"></div>
<div class="t " style="left:15.600000000000023px;top:83.9px;">Custom</div>
<div class="t " style="left:73px;top:83.9px;">6m3s</div>
<div class="t " style="left:106px;top:83.9px;">8.8%</div>
<div class="t " style="left:139px;top:83.9px;">0.03 m</div>
<div class="t " style="left:164px;top:83.9px;">0.09 g</div>
<div class="cb" style="left:195px;top:85.4px"><svg width="8" height="8" viewBox="0 0 8 8"><path d="M1.3,4.2 L3.2,6 L6.8,1.8" stroke="#1fc04a" stroke-width="1.2" fill="none"/></svg></div>
<div class="sw" style="left:6px;top:98.0px;background:#3a4fb0"></div>
<div class="t " style="left:15.600000000000023px;top:95.1px;">Travel</div>
<div class="t " style="left:73px;top:95.1px;">24s</div>
<div class="t " style="left:106px;top:95.1px;">0.6%</div>
<div class="cb" style="left:195px;top:96.6px"></div>
<div class="sw" style="left:6px;top:109.19999999999999px;background:#d92ad9"></div>
<div class="t " style="left:15.600000000000023px;top:106.29999999999998px;">Retract</div>
<div class="cb" style="left:195px;top:107.79999999999998px"></div>
<div class="sw" style="left:6px;top:120.4px;background:#3ab0d8"></div>
<div class="t " style="left:15.600000000000023px;top:117.5px;">Unretract</div>
<div class="cb" style="left:195px;top:119.0px"></div>
<div class="sw" style="left:6px;top:131.6px;background:#f0f000"></div>
<div class="t " style="left:15.600000000000023px;top:128.7px;">Wipe</div>
<div class="cb" style="left:195px;top:130.2px"></div>
<div class="sw" style="left:6px;top:142.8px;background:#eeeeee"></div>
<div class="t " style="left:15.600000000000023px;top:139.9px;">Seams</div>
<div class="cb" style="left:195px;top:141.4px"><svg width="8" height="8" viewBox="0 0 8 8"><path d="M1.3,4.2 L3.2,6 L6.8,1.8" stroke="#1fc04a" stroke-width="1.2" fill="none"/></svg></div>
<div class="t b" style="left:6px;top:155.1px;">Total Estimation</div>
<div class="sep" style="top:167.3px"></div>
<div class="t " style="left:6px;top:168.5px;">Total Filament:</div>
<div class="t " style="left:72px;top:168.5px;">3.44 m</div>
<div class="t " style="left:102px;top:168.5px;">10.26 g</div>
<div class="t " style="left:6px;top:178.6px;">Model Filament:</div>
<div class="t " style="left:72px;top:178.6px;">3.44 m</div>
<div class="t " style="left:102px;top:178.6px;">10.26 g</div>
<div class="t " style="left:6px;top:188.7px;">Cost:</div>
<div class="t " style="left:72px;top:188.7px;">0.21</div>
<div class="t " style="left:6px;top:198.8px;">Prepare time:</div>
<div class="t " style="left:72px;top:198.8px;">5m47s</div>
<div class="t " style="left:6px;top:208.9px;">Model printing time:</div>
<div class="t " style="left:72px;top:208.9px;">1h3m</div>
<div class="t " style="left:6px;top:219.0px;">Total time:</div>
<div class="t " style="left:72px;top:219.0px;">1h9m</div></div>

<!-- vertical slider -->
<svg class="abs" style="left:0;top:0" width="800" height="589">
  <path d="M770,457 m0,0" />
  <path d="M776.5,450.5 Q769,452 770,458 Q771,462 776.5,464" stroke="#13b540" stroke-width="3.2" fill="none"/>
  <path d="M789.5,452 Q795,450 798,451 L800,464" stroke="#13b540" stroke-width="3.2" fill="none"/>
  <rect x="777.3" y="73" width="11.6" height="444" rx="5.8" fill="#47444c"/>
  <rect x="779.6" y="80" width="6.8" height="432" fill="#13b540"/>
  <circle cx="782.8" cy="78.7" r="6.2" fill="#47444c"/>
  <circle cx="782.8" cy="78.7" r="5.2" fill="#13b540"/>
  <path d="M782.8,75.5 V81.9 M779.6,78.7 H786" stroke="#47444c" stroke-width="0.9"/>
  <circle cx="782.5" cy="511.4" r="6.4" fill="#47444c"/>
  <circle cx="782.5" cy="511.4" r="5.6" fill="#13b540"/>
  <!-- top label -->
  <path d="M745,60.4 H771.4 V72 L775,77 L771.4,76 V78.2 H745 Z" fill="#47464c"/>
  <!-- bottom label -->
  <path d="M751,511.4 H771.6 V529.2 H751 Z M771.6,513 L776,509 L771.6,516 Z" fill="#47464c"/>
  <!-- horizontal slider -->
  <rect x="163.1" y="565" width="450" height="12.75" rx="6.4" fill="#47444c"/>
  <rect x="166" y="568.1" width="440" height="6.7" rx="3.35" fill="#13b540"/>
  <circle cx="606" cy="571.3" r="6.3" fill="#47444c"/>
  <circle cx="606" cy="571.3" r="5.3" fill="#13b540"/>
  <path d="M616.9,566.3 H629.4 V576.3 H616.9 V573 L614,571.3 L616.9,569.5 Z" fill="#47464c"/>
  <!-- layers icon -->
  <g fill="#13b540" stroke="#3a3840" stroke-width="0.5">
   <path d="M782.7,573 L788.2,575 L782.7,577 L777.4,575 Z"/>
   <path d="M782.7,570.5 L788.2,572.6 L782.7,574.6 L777.4,572.6 Z"/>
   <path d="M782.7,566.6 L788.4,569.6 L782.7,572.6 L777.2,569.6 Z"/>
  </g>
</svg>
<div class="abs glab" style="left:745px;top:61px;width:26.4px">551<br>110.00</div>
<div class="abs glab" style="left:751px;top:512px;width:20.6px">1<br>0.20</div>
<div class="abs glab" style="left:616.9px;top:566.8px;width:12.5px;line-height:9px">37</div>
<!-- notification -->
<div class="abs" id="notif"><div id="nbar"></div><span>Configuration can update now. <u>Detail.</u></span>
<svg class="abs" style="left:181.5px;top:4px" width="15" height="15"><circle cx="7.5" cy="7.5" r="7" fill="#46444b"/><path d="M4.3,4.3 L10.7,10.7 M10.7,4.3 L4.3,10.7" stroke="#b9b9bd" stroke-width="1"/></svg></div>
</body></html>
